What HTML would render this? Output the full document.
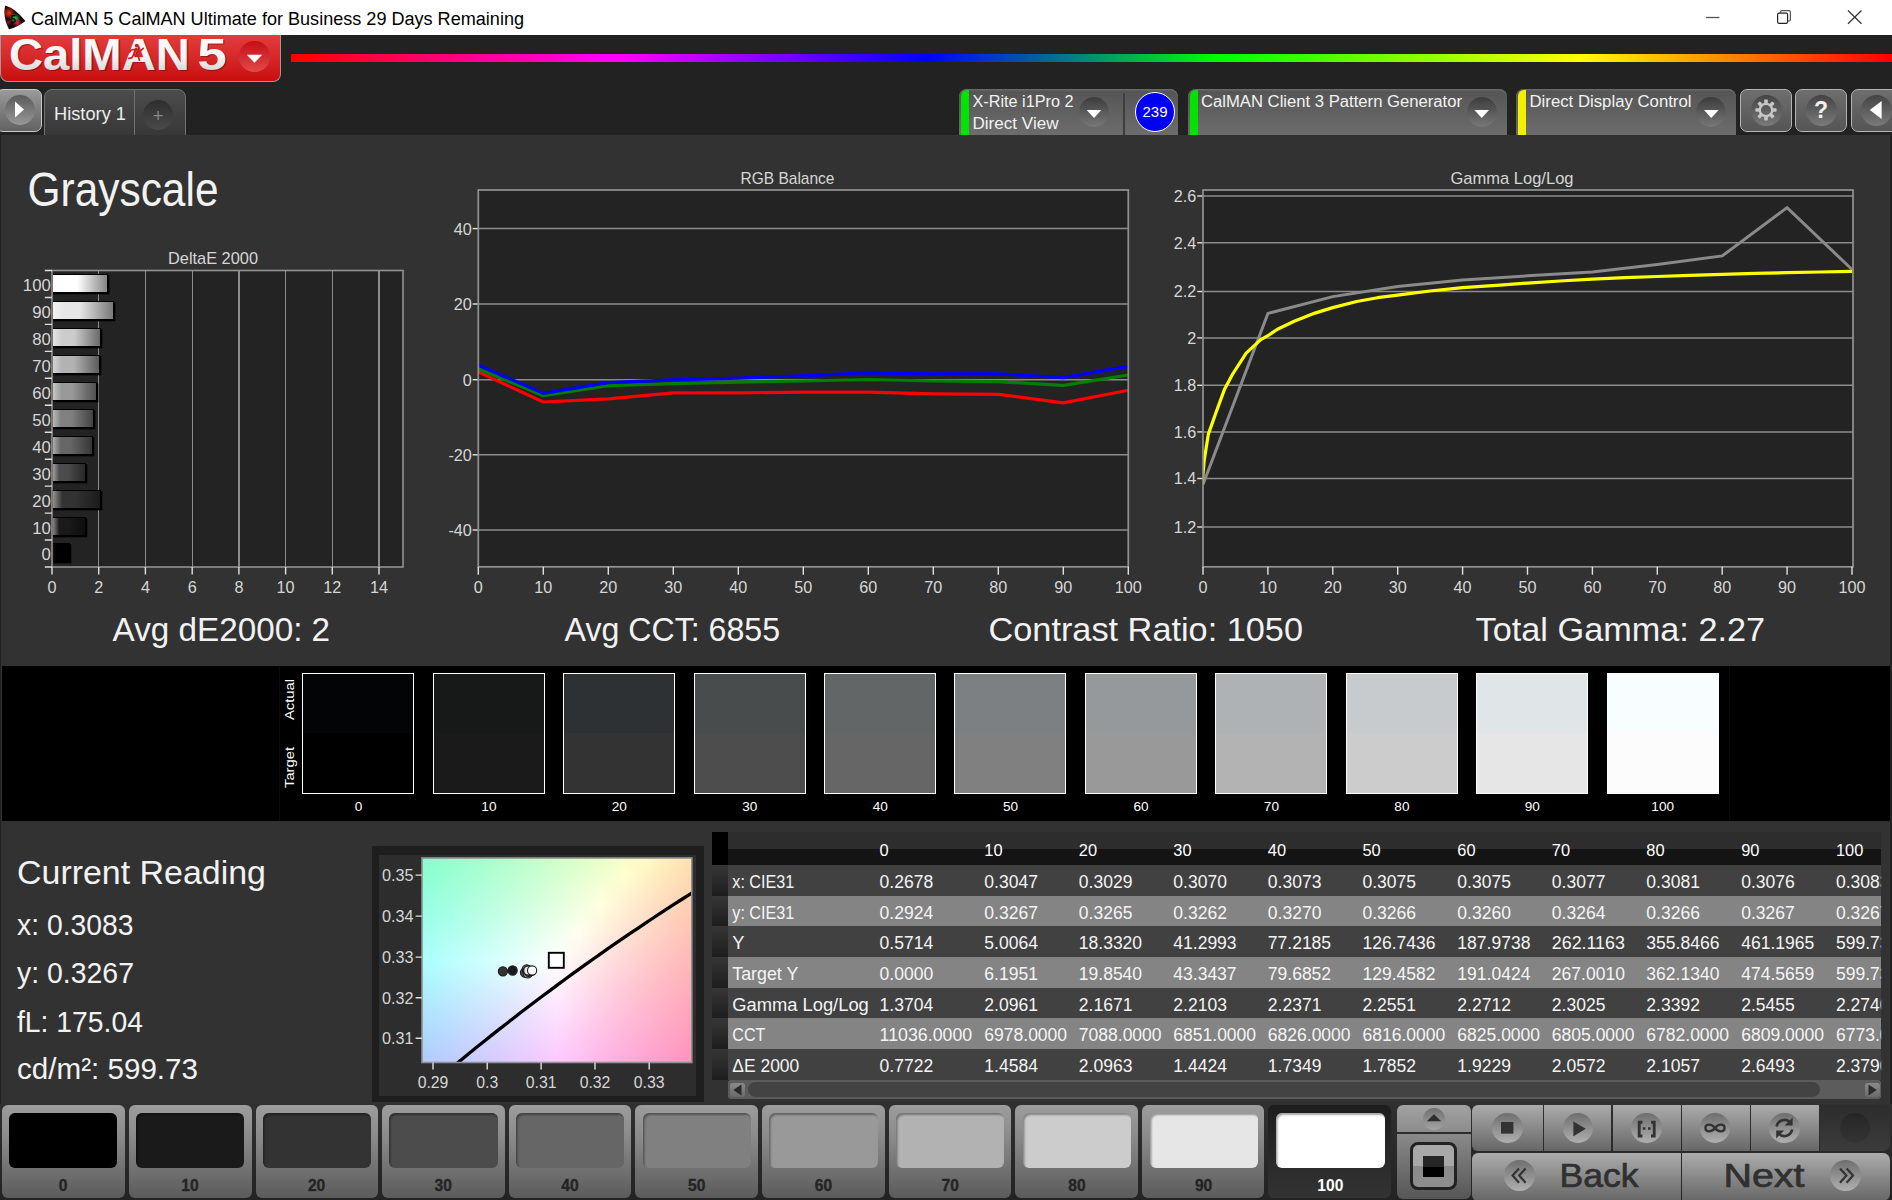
<!DOCTYPE html>
<html lang="en"><head><meta charset="utf-8"><title>CalMAN 5 CalMAN Ultimate for Business</title>
<style>
html,body{margin:0;padding:0;background:#222;}
body{width:1892px;height:1200px;overflow:hidden;position:relative;font-family:"Liberation Sans", sans-serif;}
#app{position:absolute;left:0;top:0;width:1892px;height:1200px;overflow:hidden;background:#222}
#app>div{position:absolute}
#ov{position:absolute;left:0;top:0;width:1892px;height:1200px;pointer-events:none;font-family:"Liberation Sans", sans-serif}
</style></head><body>
<div id="app">
<div style="left:0px;top:0px;width:1892px;height:35px;background:#fff"></div>
<div style="left:0px;top:35px;width:1892px;height:101px;background:#222"></div>
<div style="left:0px;top:35px;width:279px;height:45.5px;background:linear-gradient(#e23c3c,#d82a2a 45%,#c80e0e);border:1.3px solid #9a9a9a;border-top:none;border-radius:0 0 8px 8px"></div>
<div style="left:239px;top:41.2px;width:30.6px;height:30.6px;border-radius:50%;background:linear-gradient(#c40e16,#e24a4a)"></div>
<div style="left:291px;top:54px;width:1601px;height:8px;background:linear-gradient(90deg,#f00 0%,#f0f 20.5%,#00f 39.7%,#0f0 58%,#ff0 80.5%,#f00 100%)"></div>
<div style="left:-4px;top:88.8px;width:43.5px;height:41px;background:linear-gradient(#9a9a9a,#626262);border:1.5px solid #c8c8c8;border-radius:7px"></div>
<div style="left:4.7px;top:94.7px;width:30.6px;height:30.6px;border-radius:50%;background:linear-gradient(#5a5a5a,#989898)"></div>
<div style="left:44.2px;top:88.8px;width:139.5px;height:50px;background:linear-gradient(#4c4c4c,#353535);border:1.3px solid #727272;border-radius:8px 8px 0 0"></div>
<div style="left:133.8px;top:90px;width:1.3px;height:46px;background:#707070"></div>
<div style="left:143px;top:100px;width:30px;height:30px;border-radius:50%;background:linear-gradient(#2e2e2e,#4a4a4a)"></div>
<div style="left:959px;top:89px;width:219px;height:50px;background:linear-gradient(#545454,#6f6f6f);border-radius:8px 8px 0 0;box-shadow:inset 0 1.5px 0 #6a6a6a"></div>
<div style="left:961px;top:89.8px;width:8px;height:49px;background:#00e400;border-radius:6px 0 0 0"></div>
<div style="left:1079px;top:96.5px;width:30px;height:30px;border-radius:50%;background:linear-gradient(#3c3c3c,#787878)"></div>
<div style="left:1123px;top:93px;width:1.5px;height:43px;background:#3e3e3e"></div>
<div style="left:1135px;top:91.5px;width:40px;height:40px;border-radius:50%;background:#0000f4;border:1.7px solid #fff;box-sizing:border-box"></div>
<div style="left:1187.5px;top:89px;width:319.5px;height:50px;background:linear-gradient(#545454,#6f6f6f);border-radius:8px 8px 0 0;box-shadow:inset 0 1.5px 0 #6a6a6a"></div>
<div style="left:1189.5px;top:89.8px;width:8px;height:49px;background:#00e400;border-radius:6px 0 0 0"></div>
<div style="left:1466.7px;top:96.5px;width:30px;height:30px;border-radius:50%;background:linear-gradient(#3c3c3c,#787878)"></div>
<div style="left:1516px;top:89px;width:220px;height:50px;background:linear-gradient(#545454,#6f6f6f);border-radius:8px 8px 0 0;box-shadow:inset 0 1.5px 0 #6a6a6a"></div>
<div style="left:1518px;top:89.8px;width:8px;height:49px;background:#f0f000;border-radius:6px 0 0 0"></div>
<div style="left:1696.3px;top:96.5px;width:30px;height:30px;border-radius:50%;background:linear-gradient(#3c3c3c,#787878)"></div>
<div style="left:1740px;top:88.6px;width:52px;height:43px;background:linear-gradient(#6e6e6e,#555);border:1.5px solid #b4b4b4;border-radius:7px;box-sizing:border-box"></div>
<div style="left:1750.5px;top:94.5px;width:31px;height:31px;border-radius:50%;background:linear-gradient(#444,#7a7a7a)"></div>
<div style="left:1795px;top:88.6px;width:52px;height:43px;background:linear-gradient(#6e6e6e,#555);border:1.5px solid #b4b4b4;border-radius:7px;box-sizing:border-box"></div>
<div style="left:1805.5px;top:94.5px;width:31px;height:31px;border-radius:50%;background:linear-gradient(#444,#7a7a7a)"></div>
<div style="left:1850.5px;top:88.6px;width:60px;height:43px;background:linear-gradient(#6e6e6e,#555);border:1.5px solid #b4b4b4;border-radius:7px;box-sizing:border-box"></div>
<div style="left:1861.0px;top:94.5px;width:31px;height:31px;border-radius:50%;background:linear-gradient(#444,#7a7a7a)"></div>
<div style="left:1.2px;top:135.4px;width:1888.8px;height:969px;background:#323232"></div>
<div style="left:52px;top:270.5px;width:351px;height:296.5px;background:#232323"></div>
<div style="left:98.0px;top:270.5px;width:1.4px;height:296.5px;background:#8c8c8c"></div>
<div style="left:144.7px;top:270.5px;width:1.4px;height:296.5px;background:#8c8c8c"></div>
<div style="left:191.5px;top:270.5px;width:1.4px;height:296.5px;background:#8c8c8c"></div>
<div style="left:238.2px;top:270.5px;width:1.4px;height:296.5px;background:#8c8c8c"></div>
<div style="left:284.9px;top:270.5px;width:1.4px;height:296.5px;background:#8c8c8c"></div>
<div style="left:331.6px;top:270.5px;width:1.4px;height:296.5px;background:#8c8c8c"></div>
<div style="left:378.3px;top:270.5px;width:1.4px;height:296.5px;background:#8c8c8c"></div>
<div style="left:51.5px;top:273.9px;width:56.2px;height:19px;background:linear-gradient(90deg,rgba(255,255,255,0.45) 0,rgba(255,255,255,0) 20%,rgba(0,0,0,0) 45%,rgba(0,0,0,.48) 100%),rgb(255,255,255);border:1px solid #000;box-shadow:1.3px 1.3px 0 #000;box-sizing:border-box"></div>
<div style="left:51.5px;top:300.9px;width:62.5px;height:19px;background:linear-gradient(90deg,rgba(255,255,255,0.45) 0,rgba(255,255,255,0) 20%,rgba(0,0,0,0) 45%,rgba(0,0,0,.48) 100%),rgb(230,230,230);border:1px solid #000;box-shadow:1.3px 1.3px 0 #000;box-sizing:border-box"></div>
<div style="left:51.5px;top:327.8px;width:49.8px;height:19px;background:linear-gradient(90deg,rgba(255,255,255,0.45) 0,rgba(255,255,255,0) 20%,rgba(0,0,0,0) 45%,rgba(0,0,0,.48) 100%),rgb(204,204,204);border:1px solid #000;box-shadow:1.3px 1.3px 0 #000;box-sizing:border-box"></div>
<div style="left:51.5px;top:354.8px;width:48.7px;height:19px;background:linear-gradient(90deg,rgba(255,255,255,0.45) 0,rgba(255,255,255,0) 20%,rgba(0,0,0,0) 45%,rgba(0,0,0,.48) 100%),rgb(178,178,178);border:1px solid #000;box-shadow:1.3px 1.3px 0 #000;box-sizing:border-box"></div>
<div style="left:51.5px;top:381.7px;width:45.5px;height:19px;background:linear-gradient(90deg,rgba(255,255,255,0.45) 0,rgba(255,255,255,0) 20%,rgba(0,0,0,0) 45%,rgba(0,0,0,.48) 100%),rgb(153,153,153);border:1px solid #000;box-shadow:1.3px 1.3px 0 #000;box-sizing:border-box"></div>
<div style="left:51.5px;top:408.7px;width:42.3px;height:19px;background:linear-gradient(90deg,rgba(255,255,255,0.45) 0,rgba(255,255,255,0) 20%,rgba(0,0,0,0) 45%,rgba(0,0,0,.48) 100%),rgb(128,128,128);border:1px solid #000;box-shadow:1.3px 1.3px 0 #000;box-sizing:border-box"></div>
<div style="left:51.5px;top:435.6px;width:41.1px;height:19px;background:linear-gradient(90deg,rgba(255,255,255,0.45) 0,rgba(255,255,255,0) 20%,rgba(0,0,0,0) 45%,rgba(0,0,0,.48) 100%),rgb(102,102,102);border:1px solid #000;box-shadow:1.3px 1.3px 0 #000;box-sizing:border-box"></div>
<div style="left:51.5px;top:462.6px;width:34.3px;height:19px;background:linear-gradient(90deg,rgba(255,255,255,0.45) 0,rgba(255,255,255,0) 20%,rgba(0,0,0,0) 45%,rgba(0,0,0,.48) 100%),rgb(76,76,76);border:1px solid #000;box-shadow:1.3px 1.3px 0 #000;box-sizing:border-box"></div>
<div style="left:51.5px;top:489.5px;width:49.6px;height:19px;background:linear-gradient(90deg,rgba(255,255,255,0.45) 0,rgba(255,255,255,0) 20%,rgba(0,0,0,0) 45%,rgba(0,0,0,.48) 100%),rgb(51,51,51);border:1px solid #000;box-shadow:1.3px 1.3px 0 #000;box-sizing:border-box"></div>
<div style="left:51.5px;top:516.5px;width:34.7px;height:19px;background:linear-gradient(90deg,rgba(255,255,255,0.45) 0,rgba(255,255,255,0) 20%,rgba(0,0,0,0) 45%,rgba(0,0,0,.48) 100%),rgb(26,26,26);border:1px solid #000;box-shadow:1.3px 1.3px 0 #000;box-sizing:border-box"></div>
<div style="left:51.5px;top:543.4px;width:18.6px;height:19px;background:linear-gradient(90deg,rgba(255,255,255,0.08) 0,rgba(255,255,255,0) 20%,rgba(0,0,0,0) 45%,rgba(0,0,0,.48) 100%),rgb(0,0,0);border:1px solid #000;box-shadow:1.3px 1.3px 0 #000;box-sizing:border-box"></div>
<div style="left:478.3px;top:190px;width:650.0px;height:376.79999999999995px;background:#232323"></div>
<div style="left:1203px;top:190px;width:650px;height:376.79999999999995px;background:#232323"></div>
<div style="left:1.5px;top:665.5px;width:1888.5px;height:155.5px;background:#000"></div>
<div style="left:278.5px;top:665.5px;width:1px;height:155.5px;background:#0b0b0b"></div>
<div style="left:1728.5px;top:665.5px;width:1px;height:155.5px;background:#0b0b0b"></div>
<div style="left:302.3px;top:673px;width:112px;height:120.6px;box-sizing:border-box;border:1.6px solid #fff;background:linear-gradient(#030405 0,#030405 50%,#000000 50%,#000000 100%)"></div>
<div style="left:432.7px;top:673px;width:112px;height:120.6px;box-sizing:border-box;border:1.6px solid #fff;background:linear-gradient(#171918 0,#171918 50%,#1a1a1a 50%,#1a1a1a 100%)"></div>
<div style="left:563.1px;top:673px;width:112px;height:120.6px;box-sizing:border-box;border:1.6px solid #fff;background:linear-gradient(#2d3133 0,#2d3133 50%,#333333 50%,#333333 100%)"></div>
<div style="left:693.6px;top:673px;width:112px;height:120.6px;box-sizing:border-box;border:1.6px solid #fff;background:linear-gradient(#484c4d 0,#484c4d 50%,#4d4d4d 50%,#4d4d4d 100%)"></div>
<div style="left:824.0px;top:673px;width:112px;height:120.6px;box-sizing:border-box;border:1.6px solid #fff;background:linear-gradient(#626667 0,#626667 50%,#666666 50%,#666666 100%)"></div>
<div style="left:954.4px;top:673px;width:112px;height:120.6px;box-sizing:border-box;border:1.6px solid #fff;background:linear-gradient(#7c8082 0,#7c8082 50%,#808080 50%,#808080 100%)"></div>
<div style="left:1084.8px;top:673px;width:112px;height:120.6px;box-sizing:border-box;border:1.6px solid #fff;background:linear-gradient(#95999b 0,#95999b 50%,#999999 50%,#999999 100%)"></div>
<div style="left:1215.2px;top:673px;width:112px;height:120.6px;box-sizing:border-box;border:1.6px solid #fff;background:linear-gradient(#aeb2b4 0,#aeb2b4 50%,#b3b3b3 50%,#b3b3b3 100%)"></div>
<div style="left:1345.7px;top:673px;width:112px;height:120.6px;box-sizing:border-box;border:1.6px solid #fff;background:linear-gradient(#c7cbcd 0,#c7cbcd 50%,#cccccc 50%,#cccccc 100%)"></div>
<div style="left:1476.1px;top:673px;width:112px;height:120.6px;box-sizing:border-box;border:1.6px solid #fff;background:linear-gradient(#e0e5e7 0,#e0e5e7 50%,#e6e6e6 50%,#e6e6e6 100%)"></div>
<div style="left:1606.5px;top:673px;width:112px;height:120.6px;box-sizing:border-box;border:1.6px solid #fff;background:linear-gradient(#f8fdff 0,#f8fdff 50%,#fcfcfc 50%,#fcfcfc 100%)"></div>
<div style="left:371.5px;top:846px;width:332px;height:256px;background:#1e1e1e"></div>
<div style="left:379.3px;top:855px;width:316.6px;height:241.2px;background:#2d2d2d"></div>
<div style="left:422px;top:858px;width:269.8px;height:3.3px;background:linear-gradient(90deg,#86ffce,#92ffcd,#9dffcd,#a9ffcc,#b5ffcb,#c2ffcb,#cfffca,#dcffca,#e9ffc9,#f7ffc9,#fff9c4,#ffecb9,#ffe0af)"></div>
<div style="left:422px;top:861px;width:269.8px;height:3.3px;background:linear-gradient(90deg,#87ffcf,#93ffce,#9effce,#aaffcd,#b7ffcd,#c3ffcc,#d0ffcc,#ddffcb,#ebffcb,#f8ffca,#fff8c4,#ffebb9,#ffdfaf)"></div>
<div style="left:422px;top:864px;width:269.8px;height:3.3px;background:linear-gradient(90deg,#88ffd0,#94ffd0,#9fffcf,#abffcf,#b8ffce,#c4ffce,#d1ffcd,#deffcd,#ecffcc,#faffcb,#fff6c4,#ffeab9,#ffdeaf)"></div>
<div style="left:422px;top:867px;width:269.8px;height:3.3px;background:linear-gradient(90deg,#89ffd1,#95ffd1,#a0ffd1,#adffd0,#b9ffd0,#c6ffcf,#d3ffcf,#e0ffce,#edffcd,#fbffcd,#fff5c4,#ffe8ba,#ffddb0)"></div>
<div style="left:422px;top:870px;width:269.8px;height:3.3px;background:linear-gradient(90deg,#8affd3,#96ffd2,#a2ffd2,#aeffd1,#baffd1,#c7ffd0,#d4ffd0,#e1ffcf,#efffcf,#fdffce,#fff4c5,#ffe7ba,#ffdbb0)"></div>
<div style="left:422px;top:873px;width:269.8px;height:3.3px;background:linear-gradient(90deg,#8bffd4,#97ffd4,#a3ffd3,#afffd3,#bbffd2,#c8ffd2,#d5ffd1,#e3ffd1,#f0ffd0,#feffd0,#fff2c5,#ffe6ba,#ffdab0)"></div>
<div style="left:422px;top:876px;width:269.8px;height:3.3px;background:linear-gradient(90deg,#8cffd5,#98ffd5,#a4ffd5,#b0ffd4,#bdffd4,#c9ffd3,#d6ffd3,#e4ffd2,#f2ffd2,#fffed1,#fff1c5,#ffe4ba,#ffd9b0)"></div>
<div style="left:422px;top:879px;width:269.8px;height:3.3px;background:linear-gradient(90deg,#8dffd7,#99ffd6,#a5ffd6,#b1ffd6,#beffd5,#cbffd5,#d8ffd4,#e5ffd4,#f3ffd3,#fffdd1,#ffefc5,#ffe3bb,#ffd7b1)"></div>
<div style="left:422px;top:882px;width:269.8px;height:3.3px;background:linear-gradient(90deg,#8effd8,#9affd8,#a6ffd7,#b2ffd7,#bfffd6,#ccffd6,#d9ffd6,#e7ffd5,#f5ffd5,#fffbd1,#ffeec5,#ffe2bb,#ffd6b1)"></div>
<div style="left:422px;top:885px;width:269.8px;height:3.3px;background:linear-gradient(90deg,#8fffd9,#9bffd9,#a7ffd9,#b3ffd8,#c0ffd8,#cdffd7,#dbffd7,#e8ffd7,#f6ffd6,#fffad1,#ffecc6,#ffe0bb,#ffd5b1)"></div>
<div style="left:422px;top:888px;width:269.8px;height:3.3px;background:linear-gradient(90deg,#90ffdb,#9cffda,#a8ffda,#b5ffda,#c1ffd9,#ceffd9,#dcffd9,#eaffd8,#f8ffd8,#fff8d2,#ffebc6,#ffdfbb,#ffd4b1)"></div>
<div style="left:422px;top:891px;width:269.8px;height:3.3px;background:linear-gradient(90deg,#91ffdc,#9dffdc,#a9ffdc,#b6ffdb,#c3ffdb,#d0ffda,#ddffda,#ebffda,#f9ffd9,#fff7d2,#ffeac6,#ffdebc,#ffd2b2)"></div>
<div style="left:422px;top:894px;width:269.8px;height:3.3px;background:linear-gradient(90deg,#92ffde,#9effdd,#aaffdd,#b7ffdd,#c4ffdc,#d1ffdc,#dfffdb,#ecffdb,#fbffdb,#fff5d2,#ffe8c6,#ffdcbc,#ffd1b2)"></div>
<div style="left:422px;top:897px;width:269.8px;height:3.3px;background:linear-gradient(90deg,#93ffdf,#9fffdf,#acffde,#b8ffde,#c5ffde,#d2ffdd,#e0ffdd,#eeffdd,#fcffdc,#fff4d2,#ffe7c7,#ffdbbc,#ffd0b2)"></div>
<div style="left:422px;top:900px;width:269.8px;height:3.3px;background:linear-gradient(90deg,#94ffe0,#a0ffe0,#adffe0,#b9ffe0,#c6ffdf,#d4ffdf,#e1ffde,#efffde,#feffde,#fff2d2,#ffe5c7,#ffdabc,#ffcfb2)"></div>
<div style="left:422px;top:903px;width:269.8px;height:3.3px;background:linear-gradient(90deg,#95ffe2,#a1ffe2,#aeffe1,#bbffe1,#c8ffe1,#d5ffe0,#e3ffe0,#f1ffe0,#ffffdf,#fff1d3,#ffe4c7,#ffd8bc,#ffcdb3)"></div>
<div style="left:422px;top:906px;width:269.8px;height:3.3px;background:linear-gradient(90deg,#96ffe3,#a2ffe3,#afffe3,#bcffe2,#c9ffe2,#d6ffe2,#e4ffe2,#f2ffe1,#fffddf,#ffefd3,#ffe3c7,#ffd7bd,#ffccb3)"></div>
<div style="left:422px;top:909px;width:269.8px;height:3.3px;background:linear-gradient(90deg,#97ffe5,#a4ffe4,#b0ffe4,#bdffe4,#caffe4,#d8ffe3,#e6ffe3,#f4ffe3,#fffcdf,#ffeed3,#ffe1c8,#ffd6bd,#ffcbb3)"></div>
<div style="left:422px;top:912px;width:269.8px;height:3.3px;background:linear-gradient(90deg,#98ffe6,#a5ffe6,#b1ffe6,#beffe5,#ccffe5,#d9ffe5,#e7ffe5,#f5ffe4,#fffae0,#ffecd3,#ffe0c8,#ffd4bd,#ffcab3)"></div>
<div style="left:422px;top:915px;width:269.8px;height:3.3px;background:linear-gradient(90deg,#99ffe8,#a6ffe7,#b3ffe7,#c0ffe7,#cdffe7,#dbffe6,#e9ffe6,#f7ffe6,#fff9e0,#ffebd3,#ffdfc8,#ffd3bd,#ffc9b4)"></div>
<div style="left:422px;top:918px;width:269.8px;height:3.3px;background:linear-gradient(90deg,#9affe9,#a7ffe9,#b4ffe9,#c1ffe8,#ceffe8,#dcffe8,#eaffe8,#f8ffe7,#fff7e0,#ffead4,#ffddc8,#ffd2be,#ffc7b4)"></div>
<div style="left:422px;top:921px;width:269.8px;height:3.3px;background:linear-gradient(90deg,#9bffeb,#a8ffea,#b5ffea,#c2ffea,#d0ffea,#ddffea,#ecffe9,#faffe9,#fff6e0,#ffe8d4,#ffdcc8,#ffd1be,#ffc6b4)"></div>
<div style="left:422px;top:924px;width:269.8px;height:3.3px;background:linear-gradient(90deg,#9dffec,#a9ffec,#b6ffec,#c3ffec,#d1ffeb,#dfffeb,#edffeb,#fcffeb,#fff4e0,#ffe7d4,#ffdbc9,#ffcfbe,#ffc5b4)"></div>
<div style="left:422px;top:927px;width:269.8px;height:3.3px;background:linear-gradient(90deg,#9effee,#aaffed,#b7ffed,#c5ffed,#d2ffed,#e0ffed,#eeffed,#fdffec,#fff3e1,#ffe5d4,#ffd9c9,#ffcebe,#ffc4b5)"></div>
<div style="left:422px;top:930px;width:269.8px;height:3.3px;background:linear-gradient(90deg,#9fffef,#acffef,#b9ffef,#c6ffef,#d4ffef,#e2ffee,#f0ffee,#ffffee,#fff1e1,#ffe4d4,#ffd8c9,#ffcdbf,#ffc3b5)"></div>
<div style="left:422px;top:933px;width:269.8px;height:3.3px;background:linear-gradient(90deg,#a0fff1,#adfff1,#bafff0,#c7fff0,#d5fff0,#e3fff0,#f2fff0,#fffeee,#fff0e1,#ffe3d5,#ffd7c9,#ffccbf,#ffc1b5)"></div>
<div style="left:422px;top:936px;width:269.8px;height:3.3px;background:linear-gradient(90deg,#a1fff2,#aefff2,#bbfff2,#c9fff2,#d6fff2,#e5fff2,#f3fff1,#fffcef,#ffeee1,#ffe1d5,#ffd5c9,#ffcabf,#ffc0b5)"></div>
<div style="left:422px;top:939px;width:269.8px;height:3.3px;background:linear-gradient(90deg,#a2fff4,#affff4,#bcfff4,#cafff3,#d8fff3,#e6fff3,#f5fff3,#fffbef,#ffede1,#ffe0d5,#ffd4ca,#ffc9bf,#ffbfb6)"></div>
<div style="left:422px;top:942px;width:269.8px;height:3.3px;background:linear-gradient(90deg,#a3fff5,#b0fff5,#befff5,#cbfff5,#d9fff5,#e8fff5,#f6fff5,#fff9ef,#ffebe1,#ffded5,#ffd3ca,#ffc8bf,#ffbeb6)"></div>
<div style="left:422px;top:945px;width:269.8px;height:3.3px;background:linear-gradient(90deg,#a4fff7,#b2fff7,#bffff7,#cdfff7,#dbfff7,#e9fff7,#f8fff7,#fff7ef,#ffeae2,#ffddd5,#ffd1ca,#ffc7c0,#ffbdb6)"></div>
<div style="left:422px;top:948px;width:269.8px;height:3.3px;background:linear-gradient(90deg,#a6fff9,#b3fff8,#c0fff8,#cefff8,#dcfff8,#ebfff8,#f9fff8,#fff6ef,#ffe8e2,#ffdcd6,#ffd0ca,#ffc5c0,#ffbcb6)"></div>
<div style="left:422px;top:951px;width:269.8px;height:3.3px;background:linear-gradient(90deg,#a7fffa,#b4fffa,#c2fffa,#cffffa,#defffa,#ecfffa,#fbfffa,#fff4ef,#ffe7e2,#ffdad6,#ffcfcb,#ffc4c0,#ffbab7)"></div>
<div style="left:422px;top:954px;width:269.8px;height:3.3px;background:linear-gradient(90deg,#a8fffc,#b5fffc,#c3fffc,#d1fffc,#dffffc,#eefffc,#fdfffc,#fff3f0,#ffe5e2,#ffd9d6,#ffcdcb,#ffc3c0,#ffb9b7)"></div>
<div style="left:422px;top:957px;width:269.8px;height:3.3px;background:linear-gradient(90deg,#a9fffd,#b6fffd,#c4fffd,#d2fffd,#e0fffd,#effffd,#fefffd,#fff1f0,#ffe4e2,#ffd7d6,#ffcccb,#ffc2c1,#ffb8b7)"></div>
<div style="left:422px;top:960px;width:269.8px;height:3.3px;background:linear-gradient(90deg,#aaffff,#b8ffff,#c5ffff,#d3ffff,#e2ffff,#f1ffff,#fffefe,#fff0f0,#ffe2e3,#ffd6d6,#ffcbcb,#ffc1c1,#ffb7b7)"></div>
<div style="left:422px;top:963px;width:269.8px;height:3.3px;background:linear-gradient(90deg,#aafdff,#b8fdff,#c5fdff,#d3fdff,#e2fdff,#f0fdff,#fffdff,#ffeef0,#ffe1e3,#ffd5d7,#ffcacb,#ffbfc1,#ffb6b7)"></div>
<div style="left:422px;top:966px;width:269.8px;height:3.3px;background:linear-gradient(90deg,#abfcff,#b8fcff,#c5fcff,#d3fcff,#e2fbff,#f0fbff,#fffbff,#ffedf0,#ffdfe3,#ffd3d7,#ffc8cc,#ffbec1,#ffb5b8)"></div>
<div style="left:422px;top:969px;width:269.8px;height:3.3px;background:linear-gradient(90deg,#abfaff,#b8faff,#c6faff,#d3faff,#e2faff,#f0faff,#fff9ff,#ffebf0,#ffdee3,#ffd2d7,#ffc7cc,#ffbdc1,#ffb4b8)"></div>
<div style="left:422px;top:972px;width:269.8px;height:3.3px;background:linear-gradient(90deg,#abf8ff,#b8f8ff,#c6f8ff,#d3f8ff,#e2f8ff,#f0f8ff,#fff8ff,#ffeaf0,#ffdde3,#ffd1d7,#ffc6cc,#ffbcc2,#ffb2b8)"></div>
<div style="left:422px;top:975px;width:269.8px;height:3.3px;background:linear-gradient(90deg,#abf7ff,#b8f7ff,#c6f7ff,#d3f6ff,#e2f6ff,#f0f6ff,#fff6ff,#ffe8f1,#ffdbe3,#ffcfd7,#ffc5cc,#ffbbc2,#ffb1b8)"></div>
<div style="left:422px;top:978px;width:269.8px;height:3.3px;background:linear-gradient(90deg,#abf5ff,#b8f5ff,#c6f5ff,#d3f5ff,#e2f5ff,#f0f5ff,#fff4ff,#ffe7f1,#ffdae4,#ffced8,#ffc3cc,#ffb9c2,#ffb0b9)"></div>
<div style="left:422px;top:981px;width:269.8px;height:3.3px;background:linear-gradient(90deg,#abf4ff,#b8f4ff,#c6f3ff,#d3f3ff,#e2f3ff,#f0f3ff,#fff3ff,#ffe5f1,#ffd8e4,#ffcdd8,#ffc2cd,#ffb8c2,#ffafb9)"></div>
<div style="left:422px;top:984px;width:269.8px;height:3.3px;background:linear-gradient(90deg,#abf2ff,#b8f2ff,#c6f2ff,#d3f2ff,#e1f1ff,#f0f1ff,#fff1ff,#ffe4f1,#ffd7e4,#ffccd8,#ffc1cd,#ffb7c3,#ffaeb9)"></div>
<div style="left:422px;top:987px;width:269.8px;height:3.3px;background:linear-gradient(90deg,#abf1ff,#b8f0ff,#c6f0ff,#d3f0ff,#e1f0ff,#f0f0ff,#feefff,#ffe2f1,#ffd6e4,#ffcad8,#ffc0cd,#ffb6c3,#ffadb9)"></div>
<div style="left:422px;top:990px;width:269.8px;height:3.3px;background:linear-gradient(90deg,#abefff,#b8efff,#c6efff,#d3eeff,#e1eeff,#f0eeff,#feeeff,#ffe1f1,#ffd4e4,#ffc9d8,#ffbecd,#ffb5c3,#ffacb9)"></div>
<div style="left:422px;top:993px;width:269.8px;height:3.3px;background:linear-gradient(90deg,#abedff,#b8edff,#c6edff,#d3edff,#e1ecff,#f0ecff,#feecff,#ffdff2,#ffd3e4,#ffc8d8,#ffbdcd,#ffb4c3,#ffabba)"></div>
<div style="left:422px;top:996px;width:269.8px;height:3.3px;background:linear-gradient(90deg,#acecff,#b9ecff,#c6ebff,#d3ebff,#e1ebff,#f0ebff,#feeaff,#ffdef2,#ffd2e5,#ffc6d9,#ffbcce,#ffb2c3,#ffa9ba)"></div>
<div style="left:422px;top:999px;width:269.8px;height:3.3px;background:linear-gradient(90deg,#aceaff,#b9eaff,#c6eaff,#d3eaff,#e1e9ff,#efe9ff,#fee9ff,#ffdcf2,#ffd0e5,#ffc5d9,#ffbbce,#ffb1c4,#ffa8ba)"></div>
<div style="left:422px;top:1002px;width:269.8px;height:3.3px;background:linear-gradient(90deg,#ace9ff,#b9e9ff,#c6e8ff,#d3e8ff,#e1e8ff,#efe7ff,#fee7ff,#ffdbf2,#ffcfe5,#ffc4d9,#ffbace,#ffb0c4,#ffa7ba)"></div>
<div style="left:422px;top:1005px;width:269.8px;height:3.3px;background:linear-gradient(90deg,#ace7ff,#b9e7ff,#c6e7ff,#d3e6ff,#e1e6ff,#efe6ff,#fee5ff,#ffd9f2,#ffcde5,#ffc2d9,#ffb8ce,#ffafc4,#ffa6bb)"></div>
<div style="left:422px;top:1008px;width:269.8px;height:3.3px;background:linear-gradient(90deg,#ace6ff,#b9e5ff,#c6e5ff,#d3e5ff,#e1e4ff,#efe4ff,#fee4ff,#ffd8f2,#ffcce5,#ffc1d9,#ffb7ce,#ffaec4,#ffa5bb)"></div>
<div style="left:422px;top:1011px;width:269.8px;height:3.3px;background:linear-gradient(90deg,#ace4ff,#b9e4ff,#c6e4ff,#d3e3ff,#e1e3ff,#efe3ff,#fee2ff,#ffd7f2,#ffcbe5,#ffc0da,#ffb6cf,#ffadc4,#ffa4bb)"></div>
<div style="left:422px;top:1014px;width:269.8px;height:3.3px;background:linear-gradient(90deg,#ace3ff,#b9e2ff,#c6e2ff,#d3e2ff,#e1e1ff,#efe1ff,#fde1ff,#ffd5f3,#ffc9e6,#ffbfda,#ffb5cf,#ffacc5,#ffa3bb)"></div>
<div style="left:422px;top:1017px;width:269.8px;height:3.3px;background:linear-gradient(90deg,#ace1ff,#b9e1ff,#c6e1ff,#d3e0ff,#e1e0ff,#efdfff,#fddfff,#ffd4f3,#ffc8e6,#ffbdda,#ffb4cf,#ffaac5,#ffa2bb)"></div>
<div style="left:422px;top:1020px;width:269.8px;height:3.3px;background:linear-gradient(90deg,#ace0ff,#b9dfff,#c6dfff,#d3dfff,#e1deff,#efdeff,#fdddff,#ffd2f3,#ffc7e6,#ffbcda,#ffb2cf,#ffa9c5,#ffa1bc)"></div>
<div style="left:422px;top:1023px;width:269.8px;height:3.3px;background:linear-gradient(90deg,#acdeff,#b9deff,#c6ddff,#d3ddff,#e1ddff,#efdcff,#fddcff,#ffd1f3,#ffc5e6,#ffbbda,#ffb1cf,#ffa8c5,#ffa0bc)"></div>
<div style="left:422px;top:1026px;width:269.8px;height:3.3px;background:linear-gradient(90deg,#adddff,#b9dcff,#c6dcff,#d3dcff,#e1dbff,#efdbff,#fddaff,#ffd0f3,#ffc4e6,#ffbada,#ffb0d0,#ffa7c5,#ff9fbc)"></div>
<div style="left:422px;top:1029px;width:269.8px;height:3.3px;background:linear-gradient(90deg,#addbff,#b9dbff,#c6daff,#d3daff,#e1daff,#efd9ff,#fdd9ff,#ffcef3,#ffc3e6,#ffb8db,#ffafd0,#ffa6c6,#ff9ebc)"></div>
<div style="left:422px;top:1032px;width:269.8px;height:3.3px;background:linear-gradient(90deg,#addaff,#b9d9ff,#c6d9ff,#d3d9ff,#e1d8ff,#efd8ff,#fdd7ff,#ffcdf3,#ffc2e7,#ffb7db,#ffaed0,#ffa5c6,#ff9dbc)"></div>
<div style="left:422px;top:1035px;width:269.8px;height:3.3px;background:linear-gradient(90deg,#add8ff,#b9d8ff,#c6d8ff,#d3d7ff,#e1d7ff,#efd6ff,#fdd6ff,#ffcbf4,#ffc0e7,#ffb6db,#ffadd0,#ffa4c6,#ff9cbd)"></div>
<div style="left:422px;top:1038px;width:269.8px;height:3.3px;background:linear-gradient(90deg,#add7ff,#b9d7ff,#c6d6ff,#d3d6ff,#e1d5ff,#eed5ff,#fdd4ff,#ffcaf4,#ffbfe7,#ffb5db,#ffabd0,#ffa3c6,#ff9abd)"></div>
<div style="left:422px;top:1041px;width:269.8px;height:3.3px;background:linear-gradient(90deg,#add6ff,#b9d5ff,#c6d5ff,#d3d4ff,#e1d4ff,#eed3ff,#fcd2ff,#ffc9f4,#ffbee7,#ffb4db,#ffaad1,#ffa2c6,#ff99bd)"></div>
<div style="left:422px;top:1044px;width:269.8px;height:3.3px;background:linear-gradient(90deg,#add4ff,#bad4ff,#c6d3ff,#d3d3ff,#e1d2ff,#eed1ff,#fcd1ff,#ffc7f4,#ffbce7,#ffb2dc,#ffa9d1,#ffa0c7,#ff98bd)"></div>
<div style="left:422px;top:1047px;width:269.8px;height:3.3px;background:linear-gradient(90deg,#add3ff,#bad2ff,#c6d2ff,#d3d1ff,#e1d1ff,#eed0ff,#fccfff,#ffc6f4,#ffbbe7,#ffb1dc,#ffa8d1,#ff9fc7,#ff97be)"></div>
<div style="left:422px;top:1050px;width:269.8px;height:3.3px;background:linear-gradient(90deg,#add1ff,#bad1ff,#c6d0ff,#d3d0ff,#e1cfff,#eecfff,#fcceff,#ffc5f4,#ffbae8,#ffb0dc,#ffa7d1,#ff9ec7,#ff96be)"></div>
<div style="left:422px;top:1053px;width:269.8px;height:3.3px;background:linear-gradient(90deg,#add0ff,#bacfff,#c6cfff,#d3ceff,#e1ceff,#eecdff,#fcccff,#ffc3f4,#ffb9e8,#ffafdc,#ffa6d1,#ff9dc7,#ff95be)"></div>
<div style="left:422px;top:1056px;width:269.8px;height:3.3px;background:linear-gradient(90deg,#adceff,#baceff,#c6cdff,#d3cdff,#e1ccff,#eeccff,#fccbff,#ffc2f4,#ffb7e8,#ffaedc,#ffa4d1,#ff9cc7,#ff94be)"></div>
<div style="left:422px;top:1059px;width:269.8px;height:3.3px;background:linear-gradient(90deg,#aecdff,#baccff,#c6ccff,#d3cbff,#e0cbff,#eecaff,#fcc9ff,#ffc1f5,#ffb6e8,#ffacdc,#ffa3d2,#ff9bc8,#ff93be)"></div>
<div style="left:422px;top:1062px;width:269.8px;height:0.8px;background:linear-gradient(90deg,#aeccff,#baccff,#c6cbff,#d3caff,#e0caff,#eec9ff,#fcc9ff,#ffc0f5,#ffb5e8,#ffacdc,#ffa3d2,#ff9ac8,#ff93be)"></div>
<div style="left:712.2px;top:832px;width:1169.0px;height:17px;background:#2d2d2d"></div>
<div style="left:712.2px;top:849px;width:1169.0px;height:15.8px;background:#141414"></div>
<div style="left:712.2px;top:832px;width:16px;height:32.8px;background:#000"></div>
<div style="left:712.2px;top:864.8px;width:1169.0px;height:30.9px;background:#414141"></div>
<div style="left:712.2px;top:864.8px;width:16px;height:30.9px;background:linear-gradient(#363636,#1d1d1d)"></div>
<div style="left:712.2px;top:895.5px;width:1169.0px;height:30.9px;background:#848484"></div>
<div style="left:712.2px;top:895.5px;width:16px;height:30.9px;background:linear-gradient(#363636,#1d1d1d)"></div>
<div style="left:712.2px;top:926.2px;width:1169.0px;height:30.9px;background:#414141"></div>
<div style="left:712.2px;top:926.2px;width:16px;height:30.9px;background:linear-gradient(#363636,#1d1d1d)"></div>
<div style="left:712.2px;top:956.9px;width:1169.0px;height:30.9px;background:#848484"></div>
<div style="left:712.2px;top:956.9px;width:16px;height:30.9px;background:linear-gradient(#363636,#1d1d1d)"></div>
<div style="left:712.2px;top:987.6px;width:1169.0px;height:30.9px;background:#414141"></div>
<div style="left:712.2px;top:987.6px;width:16px;height:30.9px;background:linear-gradient(#363636,#1d1d1d)"></div>
<div style="left:712.2px;top:1018.3px;width:1169.0px;height:30.9px;background:#848484"></div>
<div style="left:712.2px;top:1018.3px;width:16px;height:30.9px;background:linear-gradient(#363636,#1d1d1d)"></div>
<div style="left:712.2px;top:1049.0px;width:1169.0px;height:30.9px;background:#414141"></div>
<div style="left:712.2px;top:1049.0px;width:16px;height:30.9px;background:linear-gradient(#363636,#1d1d1d)"></div>
<div style="left:728.2px;top:1080.2px;width:1153.0px;height:18.6px;background:#5c5c5c;border-radius:3px"></div>
<div style="left:748px;top:1081.8px;width:1072px;height:15.6px;background:#434343;border-radius:8px"></div>
<div style="left:729.5px;top:1083px;width:15.5px;height:14px;background:linear-gradient(#8a8a8a,#6a6a6a);border-radius:3px"></div>
<div style="left:1864.5px;top:1083px;width:15.5px;height:14px;background:linear-gradient(#8a8a8a,#6a6a6a);border-radius:3px"></div>
<div style="left:0px;top:1104px;width:1892px;height:96px;background:linear-gradient(#303030,#232323)"></div>
<div style="left:2.4px;top:1105px;width:122.7px;height:93.2px;background:linear-gradient(#9d9d9d,#8a8a8a 35%,#5b5b5b);border-radius:6px"></div>
<div style="left:9.1px;top:1112.7px;width:108.4px;height:55.2px;background:rgb(0,0,0);border-radius:6px;"></div>
<div style="left:129.0px;top:1105px;width:122.7px;height:93.2px;background:linear-gradient(#9d9d9d,#8a8a8a 35%,#5b5b5b);border-radius:6px"></div>
<div style="left:135.8px;top:1112.7px;width:108.4px;height:55.2px;background:rgb(26,26,26);border-radius:6px;box-shadow:inset 1.5px 2px 2px rgba(0,0,0,.35)"></div>
<div style="left:255.6px;top:1105px;width:122.7px;height:93.2px;background:linear-gradient(#9d9d9d,#8a8a8a 35%,#5b5b5b);border-radius:6px"></div>
<div style="left:262.5px;top:1112.7px;width:108.4px;height:55.2px;background:rgb(51,51,51);border-radius:6px;box-shadow:inset 1.5px 2px 2px rgba(0,0,0,.35)"></div>
<div style="left:382.2px;top:1105px;width:122.7px;height:93.2px;background:linear-gradient(#9d9d9d,#8a8a8a 35%,#5b5b5b);border-radius:6px"></div>
<div style="left:389.2px;top:1112.7px;width:108.4px;height:55.2px;background:rgb(76,76,76);border-radius:6px;box-shadow:inset 1.5px 2px 2px rgba(0,0,0,.35)"></div>
<div style="left:508.8px;top:1105px;width:122.7px;height:93.2px;background:linear-gradient(#9d9d9d,#8a8a8a 35%,#5b5b5b);border-radius:6px"></div>
<div style="left:515.9px;top:1112.7px;width:108.4px;height:55.2px;background:rgb(102,102,102);border-radius:6px;box-shadow:inset 1.5px 2px 2px rgba(0,0,0,.35)"></div>
<div style="left:635.4px;top:1105px;width:122.7px;height:93.2px;background:linear-gradient(#9d9d9d,#8a8a8a 35%,#5b5b5b);border-radius:6px"></div>
<div style="left:642.6px;top:1112.7px;width:108.4px;height:55.2px;background:rgb(128,128,128);border-radius:6px;box-shadow:inset 1.5px 2px 2px rgba(0,0,0,.35)"></div>
<div style="left:762.0px;top:1105px;width:122.7px;height:93.2px;background:linear-gradient(#9d9d9d,#8a8a8a 35%,#5b5b5b);border-radius:6px"></div>
<div style="left:769.4px;top:1112.7px;width:108.4px;height:55.2px;background:rgb(153,153,153);border-radius:6px;box-shadow:inset 1.5px 2px 2px rgba(0,0,0,.35)"></div>
<div style="left:888.6px;top:1105px;width:122.7px;height:93.2px;background:linear-gradient(#9d9d9d,#8a8a8a 35%,#5b5b5b);border-radius:6px"></div>
<div style="left:896.1px;top:1112.7px;width:108.4px;height:55.2px;background:rgb(178,178,178);border-radius:6px;box-shadow:inset 1.5px 2px 2px rgba(0,0,0,.35)"></div>
<div style="left:1015.2px;top:1105px;width:122.7px;height:93.2px;background:linear-gradient(#9d9d9d,#8a8a8a 35%,#5b5b5b);border-radius:6px"></div>
<div style="left:1022.8px;top:1112.7px;width:108.4px;height:55.2px;background:rgb(204,204,204);border-radius:6px;box-shadow:inset 1.5px 2px 2px rgba(0,0,0,.35)"></div>
<div style="left:1141.8px;top:1105px;width:122.7px;height:93.2px;background:linear-gradient(#9d9d9d,#8a8a8a 35%,#5b5b5b);border-radius:6px"></div>
<div style="left:1149.5px;top:1112.7px;width:108.4px;height:55.2px;background:rgb(230,230,230);border-radius:6px;box-shadow:inset 1.5px 2px 2px rgba(0,0,0,.35)"></div>
<div style="left:1268.4px;top:1105px;width:122.7px;height:93.2px;background:linear-gradient(#1d1d1d,#333);border-radius:6px"></div>
<div style="left:1276.2px;top:1112.7px;width:108.4px;height:55.2px;background:rgb(255,255,255);border-radius:6px;box-shadow:inset 1.5px 2px 2px rgba(0,0,0,.35)"></div>
<div style="left:1397px;top:1105px;width:73.5px;height:27.4px;background:linear-gradient(#a2a2a2,#8c8c8c);border-radius:6px 6px 0 0"></div>
<div style="left:1397px;top:1134px;width:73.5px;height:64.5px;background:linear-gradient(#8a8a8a,#565656);border-radius:0 0 6px 6px"></div>
<div style="left:1423px;top:1107.7px;width:22px;height:22px;border-radius:50%;background:linear-gradient(#707070,#a4a4a4)"></div>
<div style="left:1410px;top:1142.3px;width:47.2px;height:47.4px;box-sizing:border-box;border:3.6px solid #222;border-radius:8px;background:linear-gradient(#a8a8a8 0,#a8a8a8 50%,#8a8a8a 50%,#8e8e8e 100%)"></div>
<div style="left:1423.36px;top:1156px;width:20.7px;height:20.6px;background:linear-gradient(#262626 0,#262626 50%,#000 50%,#000 100%)"></div>
<div style="left:1471.8px;top:1104.8px;width:71.2px;height:46px;background:linear-gradient(#ababab,#676767);border-radius:6px 0 0 6px;"></div>
<div style="left:1544.2px;top:1104.8px;width:67.2px;height:46px;background:linear-gradient(#ababab,#676767);"></div>
<div style="left:1612.6px;top:1104.8px;width:68.0px;height:46px;background:linear-gradient(#ababab,#676767);"></div>
<div style="left:1681.8px;top:1104.8px;width:67.8px;height:46px;background:linear-gradient(#ababab,#676767);"></div>
<div style="left:1750.9px;top:1104.8px;width:67.7px;height:46px;background:linear-gradient(#ababab,#676767);"></div>
<div style="left:1819.6px;top:1104.8px;width:70.2px;height:46px;background:linear-gradient(#2c2c2c,#3c3c3c);border-radius:0 7px 7px 0"></div>
<div style="left:1491.8px;top:1112.6px;width:30.8px;height:30.8px;border-radius:50%;background:linear-gradient(#6e6e6e,#b0b0b0)"></div>
<div style="left:1562.7px;top:1112.6px;width:30.8px;height:30.8px;border-radius:50%;background:linear-gradient(#6e6e6e,#b0b0b0)"></div>
<div style="left:1631.0px;top:1112.6px;width:30.8px;height:30.8px;border-radius:50%;background:linear-gradient(#6e6e6e,#b0b0b0)"></div>
<div style="left:1699.6px;top:1112.6px;width:30.8px;height:30.8px;border-radius:50%;background:linear-gradient(#6e6e6e,#b0b0b0)"></div>
<div style="left:1769.0px;top:1112.6px;width:30.8px;height:30.8px;border-radius:50%;background:linear-gradient(#6e6e6e,#b0b0b0)"></div>
<div style="left:1839.6px;top:1112.6px;width:30.8px;height:30.8px;border-radius:50%;background:linear-gradient(#262626,#343434)"></div>
<div style="left:1471.8px;top:1153px;width:208.8px;height:48px;background:linear-gradient(#acacac,#666);border-radius:6px 0 0 6px"></div>
<div style="left:1681.8px;top:1153px;width:208.2px;height:48px;background:linear-gradient(#acacac,#666);border-radius:0 7px 7px 0"></div>
<div style="left:1504px;top:1160.2px;width:30.8px;height:30.8px;border-radius:50%;background:linear-gradient(#6e6e6e,#b0b0b0)"></div>
<div style="left:1830.4px;top:1160.2px;width:30.8px;height:30.8px;border-radius:50%;background:linear-gradient(#6e6e6e,#b0b0b0)"></div>
<svg id="ov" width="1892" height="1200" viewBox="0 0 1892 1200">
<defs><clipPath id="icc"><path d="M5.2 5.4Q15.5 8.5 25.4 21Q17.5 27.2 9 29.2Q2.6 17 5.2 5.4Z"/></clipPath><radialGradient id="ic1"><stop offset="0" stop-color="#ff3010"/><stop offset="1" stop-color="#ff3010" stop-opacity="0"/></radialGradient><radialGradient id="ic2"><stop offset="0" stop-color="#30d040"/><stop offset="1" stop-color="#30d040" stop-opacity="0"/></radialGradient><radialGradient id="ic3"><stop offset="0" stop-color="#e0204a"/><stop offset="1" stop-color="#e0204a" stop-opacity="0"/></radialGradient></defs>
<g clip-path="url(#icc)"><rect x="0" y="0" width="30" height="34" fill="#120606"/><circle cx="9" cy="13" r="6.5" fill="url(#ic1)"/><circle cx="15" cy="18.5" r="5.5" fill="url(#ic2)"/><circle cx="17.5" cy="23" r="5" fill="url(#ic3)"/><circle cx="8.5" cy="22.5" r="3.5" fill="url(#ic3)" opacity=".6"/></g>
<text x="10.6" y="23" font-size="10" fill="#0a0a0a" text-anchor="start" font-weight="bold" >5</text>
<text x="31" y="25" font-size="17.6" fill="#000" text-anchor="start" font-weight="normal" textLength="493" lengthAdjust="spacingAndGlyphs" >CalMAN 5 CalMAN Ultimate for Business 29 Days Remaining</text>
<path d="M1706 17.5H1719.5" stroke="#555" stroke-width="1.3" fill="none"/>
<rect x="1777.6" y="13.2" width="10" height="10.2" rx="1.6" fill="#fff" stroke="#222" stroke-width="1.2"/>
<path d="M1780.5 13V12.2Q1780.5 10.7 1782 10.7H1788.8Q1790.4 10.7 1790.4 12.2V19.5Q1790.4 21 1788.9 21H1788" stroke="#555" stroke-width="1.2" fill="none"/>
<path d="M1848 10.5L1861.5 23.7M1861.5 10.5L1848 23.7" stroke="#333" stroke-width="1.2" fill="none"/>
<defs><linearGradient id="lg" x1="0" y1="0" x2="0" y2="1"><stop offset="0" stop-color="#fff"/><stop offset=".55" stop-color="#f4f4f4"/><stop offset="1" stop-color="#c9c9c9"/></linearGradient></defs>
<text x="10.2" y="71" font-size="43.5" fill="#7a0c0c" text-anchor="start" font-weight="bold" textLength="181" lengthAdjust="spacingAndGlyphs" opacity=".6">CalMAN</text>
<text x="198.6" y="71" font-size="43.5" fill="#7a0c0c" text-anchor="start" font-weight="bold" textLength="29.5" lengthAdjust="spacingAndGlyphs" opacity=".6">5</text>
<text x="8.9" y="69.6" font-size="43.5" fill="url(#lg)" text-anchor="start" font-weight="bold" textLength="181" lengthAdjust="spacingAndGlyphs" >CalMAN</text>
<text x="197.3" y="69.6" font-size="43.5" fill="url(#lg)" text-anchor="start" font-weight="bold" textLength="29.5" lengthAdjust="spacingAndGlyphs" >5</text>
<g fill="none" stroke="#cf2222" stroke-width="1.7" stroke-linecap="round" stroke-linejoin="round"><path d="M136 48.8L133.8 54.6"  stroke-width="2.3"/><path d="M135.6 49.4L131 50L129.6 52.4"/><path d="M136.2 49.6L139.6 51.6L143.2 48.4"/><path d="M133.8 54.6L138.2 55.8L139.4 60.2"/><path d="M133.8 54.6L131.8 57.8L128.8 58.4"/></g><circle cx="136.7" cy="45.6" r="1.9" fill="#cf2222"/>
<path d="M246.8 54.8H262.2L254.5 62.8Z" fill="#fff"/>
<path d="M15 101.6V117.4L24 109.5Z" fill="#fff"/>
<text x="54" y="119.7" font-size="18.2" fill="#ececec" text-anchor="start" font-weight="normal" textLength="72" lengthAdjust="spacingAndGlyphs" >History 1</text>
<path d="M153.6 115.6H162.6M158.1 111.1V120.1" stroke="#8a8a8a" stroke-width="1.3" fill="none"/>
<text x="972.5" y="107" font-size="17.3" fill="#f2f2f2" text-anchor="start" font-weight="normal" textLength="101" lengthAdjust="spacingAndGlyphs" >X-Rite i1Pro 2</text>
<text x="972.5" y="128.6" font-size="17.3" fill="#f2f2f2" text-anchor="start" font-weight="normal" textLength="86" lengthAdjust="spacingAndGlyphs" >Direct View</text>
<path d="M1086.7 110.1H1101.3L1094 117.9Z" fill="#fff"/>
<text x="1155" y="117" font-size="15.2" fill="#fff" text-anchor="middle" font-weight="normal" textLength="25" lengthAdjust="spacingAndGlyphs" >239</text>
<text x="1201" y="107" font-size="17.3" fill="#f2f2f2" text-anchor="start" font-weight="normal" textLength="261" lengthAdjust="spacingAndGlyphs" >CalMAN Client 3 Pattern Generator</text>
<path d="M1474.4 110.1H1489.0L1481.7 117.9Z" fill="#fff"/>
<text x="1529.5" y="107" font-size="17.3" fill="#f2f2f2" text-anchor="start" font-weight="normal" textLength="162" lengthAdjust="spacingAndGlyphs" >Direct Display Control</text>
<path d="M1704.0 110.1H1718.6L1711.3 117.9Z" fill="#fff"/>
<rect x="1764.2" y="99.4" width="3.6" height="4.2" rx=".8" fill="#c6c6c6" transform="rotate(0 1766 110)"/><rect x="1764.2" y="99.4" width="3.6" height="4.2" rx=".8" fill="#c6c6c6" transform="rotate(45 1766 110)"/><rect x="1764.2" y="99.4" width="3.6" height="4.2" rx=".8" fill="#c6c6c6" transform="rotate(90 1766 110)"/><rect x="1764.2" y="99.4" width="3.6" height="4.2" rx=".8" fill="#c6c6c6" transform="rotate(135 1766 110)"/><rect x="1764.2" y="99.4" width="3.6" height="4.2" rx=".8" fill="#c6c6c6" transform="rotate(180 1766 110)"/><rect x="1764.2" y="99.4" width="3.6" height="4.2" rx=".8" fill="#c6c6c6" transform="rotate(225 1766 110)"/><rect x="1764.2" y="99.4" width="3.6" height="4.2" rx=".8" fill="#c6c6c6" transform="rotate(270 1766 110)"/><rect x="1764.2" y="99.4" width="3.6" height="4.2" rx=".8" fill="#c6c6c6" transform="rotate(315 1766 110)"/><circle cx="1766" cy="110" r="6.2" fill="none" stroke="#c6c6c6" stroke-width="2.3"/>
<text x="1821" y="118.2" font-size="23" fill="#f0f0f0" text-anchor="middle" font-weight="bold" >?</text>
<path d="M1881.6 101V119L1869.8 110Z" fill="#fff"/>
<text x="27.5" y="205.6" font-size="47.5" fill="#f2f2f2" text-anchor="start" font-weight="normal" textLength="191" lengthAdjust="spacingAndGlyphs" >Grayscale</text>
<text x="213" y="264" font-size="16.2" fill="#d6d6d6" text-anchor="middle" font-weight="normal" textLength="90" lengthAdjust="spacingAndGlyphs" >DeltaE 2000</text>
<text x="50.8" y="290.9" font-size="16.8" fill="#d6d6d6" text-anchor="end" font-weight="normal" >100</text>
<text x="50.8" y="317.8" font-size="16.8" fill="#d6d6d6" text-anchor="end" font-weight="normal" >90</text>
<text x="50.8" y="344.8" font-size="16.8" fill="#d6d6d6" text-anchor="end" font-weight="normal" >80</text>
<text x="50.8" y="371.7" font-size="16.8" fill="#d6d6d6" text-anchor="end" font-weight="normal" >70</text>
<text x="50.8" y="398.7" font-size="16.8" fill="#d6d6d6" text-anchor="end" font-weight="normal" >60</text>
<text x="50.8" y="425.6" font-size="16.8" fill="#d6d6d6" text-anchor="end" font-weight="normal" >50</text>
<text x="50.8" y="452.6" font-size="16.8" fill="#d6d6d6" text-anchor="end" font-weight="normal" >40</text>
<text x="50.8" y="479.6" font-size="16.8" fill="#d6d6d6" text-anchor="end" font-weight="normal" >30</text>
<text x="50.8" y="506.5" font-size="16.8" fill="#d6d6d6" text-anchor="end" font-weight="normal" >20</text>
<text x="50.8" y="533.5" font-size="16.8" fill="#d6d6d6" text-anchor="end" font-weight="normal" >10</text>
<text x="50.8" y="560.4" font-size="16.8" fill="#d6d6d6" text-anchor="end" font-weight="normal" >0</text>
<rect x="52" y="270.5" width="351" height="296.5" fill="none" stroke="#929292" stroke-width="1.6"/>
<text x="52.0" y="592.7" font-size="16.2" fill="#d6d6d6" text-anchor="middle" font-weight="normal" >0</text>
<text x="98.7" y="592.7" font-size="16.2" fill="#d6d6d6" text-anchor="middle" font-weight="normal" >2</text>
<text x="145.4" y="592.7" font-size="16.2" fill="#d6d6d6" text-anchor="middle" font-weight="normal" >4</text>
<text x="192.2" y="592.7" font-size="16.2" fill="#d6d6d6" text-anchor="middle" font-weight="normal" >6</text>
<text x="238.9" y="592.7" font-size="16.2" fill="#d6d6d6" text-anchor="middle" font-weight="normal" >8</text>
<text x="285.6" y="592.7" font-size="16.2" fill="#d6d6d6" text-anchor="middle" font-weight="normal" >10</text>
<text x="332.3" y="592.7" font-size="16.2" fill="#d6d6d6" text-anchor="middle" font-weight="normal" >12</text>
<text x="379.0" y="592.7" font-size="16.2" fill="#d6d6d6" text-anchor="middle" font-weight="normal" >14</text>
<path d="M44.8 270.5H52M44.8 297.5H52M44.8 324.4H52M44.8 351.4H52M44.8 378.3H52M44.8 405.3H52M44.8 432.2H52M44.8 459.2H52M44.8 486.1H52M44.8 513.1H52M44.8 540.0H52M44.8 567.0H52M52.0 567V574.6M98.7 567V574.6M145.4 567V574.6M192.2 567V574.6M238.9 567V574.6M285.6 567V574.6M332.3 567V574.6M379.0 567V574.6" stroke="#e0e0e0" stroke-width="1.4" fill="none"/>
<text x="787.5" y="184" font-size="16.2" fill="#d6d6d6" text-anchor="middle" font-weight="normal" textLength="94" lengthAdjust="spacingAndGlyphs" >RGB Balance</text>
<path d="M472.6 228.6H478.3" stroke="#e0e0e0" stroke-width="1.4"/>
<text x="471.8" y="234.5" font-size="16.2" fill="#d6d6d6" text-anchor="end" font-weight="normal" >40</text>
<path d="M472.6 304H478.3" stroke="#e0e0e0" stroke-width="1.4"/>
<text x="471.8" y="309.9" font-size="16.2" fill="#d6d6d6" text-anchor="end" font-weight="normal" >20</text>
<path d="M472.6 379.7H478.3" stroke="#e0e0e0" stroke-width="1.4"/>
<text x="471.8" y="385.59999999999997" font-size="16.2" fill="#d6d6d6" text-anchor="end" font-weight="normal" >0</text>
<path d="M472.6 454.8H478.3" stroke="#e0e0e0" stroke-width="1.4"/>
<text x="471.8" y="460.7" font-size="16.2" fill="#d6d6d6" text-anchor="end" font-weight="normal" >-20</text>
<path d="M472.6 530H478.3" stroke="#e0e0e0" stroke-width="1.4"/>
<text x="471.8" y="535.9" font-size="16.2" fill="#d6d6d6" text-anchor="end" font-weight="normal" >-40</text>
<path d="M478.3 228.6H1128.3M478.3 304H1128.3M478.3 379.7H1128.3M478.3 454.8H1128.3M478.3 530H1128.3" stroke="#8c8c8c" stroke-width="1.5" fill="none"/>
<clipPath id="cpa"><rect x="478.3" y="190" width="650.0" height="376.79999999999995"/></clipPath>
<polyline points="478.3,372.0 543.3,402.0 608.3,398.9 673.3,392.8 738.3,392.8 803.3,392.1 868.3,392.1 933.3,393.9 998.3,394.4 1063.3,402.9 1128.3,390.3" fill="none" stroke="#ff0000" stroke-width="3.2" stroke-linejoin="round" clip-path="url(#cpa)"/>
<polyline points="478.3,368.8 543.3,395.7 608.3,385.6 673.3,383.7 738.3,382.2 803.3,381.0 868.3,379.5 933.3,381.0 998.3,381.7 1063.3,385.3 1128.3,375.0" fill="none" stroke="#008000" stroke-width="3.2" stroke-linejoin="round" clip-path="url(#cpa)"/>
<polyline points="478.3,365.2 543.3,393.4 608.3,382.6 673.3,379.9 738.3,378.1 803.3,375.8 868.3,372.9 933.3,373.8 998.3,373.8 1063.3,377.7 1128.3,366.4" fill="none" stroke="#0000ff" stroke-width="3.2" stroke-linejoin="round" clip-path="url(#cpa)"/>
<rect x="478.3" y="190" width="650.0" height="376.79999999999995" fill="none" stroke="#929292" stroke-width="1.7"/>
<text x="478.3" y="593" font-size="16.2" fill="#d6d6d6" text-anchor="middle" font-weight="normal" >0</text>
<text x="543.3" y="593" font-size="16.2" fill="#d6d6d6" text-anchor="middle" font-weight="normal" >10</text>
<text x="608.3" y="593" font-size="16.2" fill="#d6d6d6" text-anchor="middle" font-weight="normal" >20</text>
<text x="673.3" y="593" font-size="16.2" fill="#d6d6d6" text-anchor="middle" font-weight="normal" >30</text>
<text x="738.3" y="593" font-size="16.2" fill="#d6d6d6" text-anchor="middle" font-weight="normal" >40</text>
<text x="803.3" y="593" font-size="16.2" fill="#d6d6d6" text-anchor="middle" font-weight="normal" >50</text>
<text x="868.3" y="593" font-size="16.2" fill="#d6d6d6" text-anchor="middle" font-weight="normal" >60</text>
<text x="933.3" y="593" font-size="16.2" fill="#d6d6d6" text-anchor="middle" font-weight="normal" >70</text>
<text x="998.3" y="593" font-size="16.2" fill="#d6d6d6" text-anchor="middle" font-weight="normal" >80</text>
<text x="1063.3" y="593" font-size="16.2" fill="#d6d6d6" text-anchor="middle" font-weight="normal" >90</text>
<text x="1128.3" y="593" font-size="16.2" fill="#d6d6d6" text-anchor="middle" font-weight="normal" >100</text>
<path d="M478.3 566.8V574.8M543.3 566.8V574.8M608.3 566.8V574.8M673.3 566.8V574.8M738.3 566.8V574.8M803.3 566.8V574.8M868.3 566.8V574.8M933.3 566.8V574.8M998.3 566.8V574.8M1063.3 566.8V574.8M1128.3 566.8V574.8" stroke="#e0e0e0" stroke-width="1.4" fill="none"/>
<text x="1512" y="184" font-size="16.2" fill="#d6d6d6" text-anchor="middle" font-weight="normal" textLength="123" lengthAdjust="spacingAndGlyphs" >Gamma Log/Log</text>
<path d="M1197.2 196H1203" stroke="#e0e0e0" stroke-width="1.4"/>
<text x="1196.2" y="201.9" font-size="16.2" fill="#d6d6d6" text-anchor="end" font-weight="normal" >2.6</text>
<path d="M1197.2 242.8H1203" stroke="#e0e0e0" stroke-width="1.4"/>
<text x="1196.2" y="248.70000000000002" font-size="16.2" fill="#d6d6d6" text-anchor="end" font-weight="normal" >2.4</text>
<path d="M1197.2 291.5H1203" stroke="#e0e0e0" stroke-width="1.4"/>
<text x="1196.2" y="297.4" font-size="16.2" fill="#d6d6d6" text-anchor="end" font-weight="normal" >2.2</text>
<path d="M1197.2 337.9H1203" stroke="#e0e0e0" stroke-width="1.4"/>
<text x="1196.2" y="343.79999999999995" font-size="16.2" fill="#d6d6d6" text-anchor="end" font-weight="normal" >2</text>
<path d="M1197.2 385.3H1203" stroke="#e0e0e0" stroke-width="1.4"/>
<text x="1196.2" y="391.2" font-size="16.2" fill="#d6d6d6" text-anchor="end" font-weight="normal" >1.8</text>
<path d="M1197.2 431.9H1203" stroke="#e0e0e0" stroke-width="1.4"/>
<text x="1196.2" y="437.79999999999995" font-size="16.2" fill="#d6d6d6" text-anchor="end" font-weight="normal" >1.6</text>
<path d="M1197.2 478.5H1203" stroke="#e0e0e0" stroke-width="1.4"/>
<text x="1196.2" y="484.4" font-size="16.2" fill="#d6d6d6" text-anchor="end" font-weight="normal" >1.4</text>
<path d="M1197.2 527H1203" stroke="#e0e0e0" stroke-width="1.4"/>
<text x="1196.2" y="532.9" font-size="16.2" fill="#d6d6d6" text-anchor="end" font-weight="normal" >1.2</text>
<path d="M1203 196H1853M1203 242.8H1853M1203 291.5H1853M1203 337.9H1853M1203 385.3H1853M1203 431.9H1853M1203 478.5H1853M1203 527H1853" stroke="#8c8c8c" stroke-width="1.5" fill="none"/>
<clipPath id="cpb"><rect x="1203" y="190" width="650" height="376.79999999999995"/></clipPath>
<polyline points="1203.0,484.5 1267.9,313.4 1332.8,296.6 1397.7,286.4 1462.6,280.0 1527.5,275.8 1592.4,272.0 1657.3,264.6 1722.2,255.9 1787.1,207.6 1852.0,269.5" fill="none" stroke="#8a8a8a" stroke-width="3" stroke-linejoin="miter" clip-path="url(#cpb)"/>
<polyline points="1202.1,483.5 1204.2,460.4 1208.3,434.4 1216.0,412.5 1224.4,389.6 1232.7,374.0 1246.2,353.1 1260.8,339.6 1267.9,335.7 1277.5,329.2 1294.2,321.2 1315.0,313.1 1332.8,307.6 1356.7,301.5 1377.5,297.7 1397.7,295.2 1430.0,291.0 1462.6,287.6 1500.0,285.1 1527.5,283.1 1560.0,281.0 1592.4,279.1 1625.0,277.7 1657.3,276.5 1690.0,275.3 1722.2,274.3 1755.0,273.4 1787.1,272.7 1820.0,272.0 1852.5,271.3" fill="none" stroke="#ffff00" stroke-width="3.2" stroke-linejoin="round" clip-path="url(#cpb)"/>
<rect x="1203" y="190" width="650" height="376.79999999999995" fill="none" stroke="#929292" stroke-width="1.7"/>
<text x="1203.0" y="593" font-size="16.2" fill="#d6d6d6" text-anchor="middle" font-weight="normal" >0</text>
<text x="1267.9" y="593" font-size="16.2" fill="#d6d6d6" text-anchor="middle" font-weight="normal" >10</text>
<text x="1332.8" y="593" font-size="16.2" fill="#d6d6d6" text-anchor="middle" font-weight="normal" >20</text>
<text x="1397.7" y="593" font-size="16.2" fill="#d6d6d6" text-anchor="middle" font-weight="normal" >30</text>
<text x="1462.6" y="593" font-size="16.2" fill="#d6d6d6" text-anchor="middle" font-weight="normal" >40</text>
<text x="1527.5" y="593" font-size="16.2" fill="#d6d6d6" text-anchor="middle" font-weight="normal" >50</text>
<text x="1592.4" y="593" font-size="16.2" fill="#d6d6d6" text-anchor="middle" font-weight="normal" >60</text>
<text x="1657.3" y="593" font-size="16.2" fill="#d6d6d6" text-anchor="middle" font-weight="normal" >70</text>
<text x="1722.2" y="593" font-size="16.2" fill="#d6d6d6" text-anchor="middle" font-weight="normal" >80</text>
<text x="1787.1" y="593" font-size="16.2" fill="#d6d6d6" text-anchor="middle" font-weight="normal" >90</text>
<text x="1852.0" y="593" font-size="16.2" fill="#d6d6d6" text-anchor="middle" font-weight="normal" >100</text>
<path d="M1203.0 566.8V574.8M1267.9 566.8V574.8M1332.8 566.8V574.8M1397.7 566.8V574.8M1462.6 566.8V574.8M1527.5 566.8V574.8M1592.4 566.8V574.8M1657.3 566.8V574.8M1722.2 566.8V574.8M1787.1 566.8V574.8M1852.0 566.8V574.8" stroke="#e0e0e0" stroke-width="1.4" fill="none"/>
<text x="112.6" y="640.7" font-size="33.6" fill="#f2f2f2" text-anchor="start" font-weight="normal" textLength="217.5" lengthAdjust="spacingAndGlyphs" >Avg dE2000: 2</text>
<text x="564.6" y="640.7" font-size="33.6" fill="#f2f2f2" text-anchor="start" font-weight="normal" textLength="215.5" lengthAdjust="spacingAndGlyphs" >Avg CCT: 6855</text>
<text x="988.5" y="640.7" font-size="33.6" fill="#f2f2f2" text-anchor="start" font-weight="normal" textLength="314.5" lengthAdjust="spacingAndGlyphs" >Contrast Ratio: 1050</text>
<text x="1475.6" y="640.7" font-size="33.6" fill="#f2f2f2" text-anchor="start" font-weight="normal" textLength="289.5" lengthAdjust="spacingAndGlyphs" >Total Gamma: 2.27</text>
<text x="358.5" y="811.2" font-size="13.6" fill="#fff" text-anchor="middle" font-weight="normal" >0</text>
<text x="488.9" y="811.2" font-size="13.6" fill="#fff" text-anchor="middle" font-weight="normal" >10</text>
<text x="619.3" y="811.2" font-size="13.6" fill="#fff" text-anchor="middle" font-weight="normal" >20</text>
<text x="749.8" y="811.2" font-size="13.6" fill="#fff" text-anchor="middle" font-weight="normal" >30</text>
<text x="880.2" y="811.2" font-size="13.6" fill="#fff" text-anchor="middle" font-weight="normal" >40</text>
<text x="1010.6" y="811.2" font-size="13.6" fill="#fff" text-anchor="middle" font-weight="normal" >50</text>
<text x="1141.0" y="811.2" font-size="13.6" fill="#fff" text-anchor="middle" font-weight="normal" >60</text>
<text x="1271.4" y="811.2" font-size="13.6" fill="#fff" text-anchor="middle" font-weight="normal" >70</text>
<text x="1401.9" y="811.2" font-size="13.6" fill="#fff" text-anchor="middle" font-weight="normal" >80</text>
<text x="1532.3" y="811.2" font-size="13.6" fill="#fff" text-anchor="middle" font-weight="normal" >90</text>
<text x="1662.7" y="811.2" font-size="13.6" fill="#fff" text-anchor="middle" font-weight="normal" >100</text>
<text x="0" y="0" font-size="13.6" fill="#fff" text-anchor="start" font-weight="normal" textLength="41" lengthAdjust="spacingAndGlyphs" transform="translate(294.3 720) rotate(-90)">Actual</text>
<text x="0" y="0" font-size="13.6" fill="#fff" text-anchor="start" font-weight="normal" textLength="41" lengthAdjust="spacingAndGlyphs" transform="translate(294.3 788) rotate(-90)">Target</text>
<text x="17" y="884.1" font-size="33.8" fill="#f2f2f2" text-anchor="start" font-weight="normal" textLength="249" lengthAdjust="spacingAndGlyphs" >Current Reading</text>
<text x="17" y="934.6" font-size="30.2" fill="#f2f2f2" text-anchor="start" font-weight="normal" textLength="116.5" lengthAdjust="spacingAndGlyphs" >x: 0.3083</text>
<text x="17" y="983" font-size="30.2" fill="#f2f2f2" text-anchor="start" font-weight="normal" textLength="117" lengthAdjust="spacingAndGlyphs" >y: 0.3267</text>
<text x="17" y="1031.6" font-size="30.2" fill="#f2f2f2" text-anchor="start" font-weight="normal" textLength="126" lengthAdjust="spacingAndGlyphs" >fL: 175.04</text>
<text x="17" y="1079.2" font-size="30.2" fill="#f2f2f2" text-anchor="start" font-weight="normal" textLength="181" lengthAdjust="spacingAndGlyphs" >cd/m²: 599.73</text>
<clipPath id="cpc"><rect x="422" y="858" width="269.79999999999995" height="204.5"/></clipPath>
<polyline points="411.5,1101.7 418.8,1095.4 426.1,1089.1 433.4,1083.0 440.7,1076.8 448.0,1070.7 455.3,1064.7 462.6,1058.7 469.9,1052.7 477.2,1046.8 484.5,1041.0 491.8,1035.1 499.1,1029.4 506.4,1023.7 513.7,1018.0 521.0,1012.3 528.3,1006.8 535.6,1001.2 542.9,995.7 550.2,990.3 557.5,984.9 564.8,979.5 572.1,974.2 579.4,968.9 586.7,963.7 594.0,958.5 601.3,953.3 608.6,948.2 615.9,943.2 623.2,938.2 630.5,933.2 637.8,928.3 645.1,923.4 652.4,918.5 659.7,913.7 667.0,908.9 674.3,904.2 681.6,899.5 688.9,894.9 696.2,890.3 703.5,885.7" fill="none" stroke="#000" stroke-width="3.3" clip-path="url(#cpc)"/>
<rect x="548.8" y="952.8" width="15" height="15" fill="#fff" stroke="#000" stroke-width="1.9"/>
<circle cx="502.9" cy="971.3" r="4.6" fill="rgb(51,51,51)" stroke="#1a1a1a" stroke-width="1.1"/>
<circle cx="512.6" cy="970.5" r="4.6" fill="rgb(26,26,26)" stroke="#1a1a1a" stroke-width="1.1"/>
<circle cx="525.0" cy="972.6" r="4.6" fill="rgb(76,76,76)" stroke="#1a1a1a" stroke-width="1.1"/>
<circle cx="526.7" cy="969.3" r="4.6" fill="rgb(102,102,102)" stroke="#1a1a1a" stroke-width="1.1"/>
<circle cx="527.8" cy="970.9" r="4.6" fill="rgb(128,128,128)" stroke="#1a1a1a" stroke-width="1.1"/>
<circle cx="527.8" cy="973.4" r="4.6" fill="rgb(153,153,153)" stroke="#1a1a1a" stroke-width="1.1"/>
<circle cx="528.8" cy="971.8" r="4.6" fill="rgb(178,178,178)" stroke="#1a1a1a" stroke-width="1.1"/>
<circle cx="531.0" cy="970.9" r="4.6" fill="rgb(204,204,204)" stroke="#1a1a1a" stroke-width="1.1"/>
<circle cx="528.3" cy="970.5" r="4.6" fill="rgb(230,230,230)" stroke="#1a1a1a" stroke-width="1.1"/>
<circle cx="532.1" cy="970.5" r="4.6" fill="rgb(255,255,255)" stroke="#1a1a1a" stroke-width="1.1"/>
<rect x="422" y="858" width="269.79999999999995" height="204.5" fill="none" stroke="#929292" stroke-width="1.6"/>
<text x="413.4" y="880.9" font-size="15.8" fill="#d6d6d6" text-anchor="end" font-weight="normal" textLength="31.5" lengthAdjust="spacingAndGlyphs" >0.35</text>
<text x="413.4" y="921.9" font-size="15.8" fill="#d6d6d6" text-anchor="end" font-weight="normal" textLength="31.5" lengthAdjust="spacingAndGlyphs" >0.34</text>
<text x="413.4" y="962.9" font-size="15.8" fill="#d6d6d6" text-anchor="end" font-weight="normal" textLength="31.5" lengthAdjust="spacingAndGlyphs" >0.33</text>
<text x="413.4" y="1003.5" font-size="15.8" fill="#d6d6d6" text-anchor="end" font-weight="normal" textLength="31.5" lengthAdjust="spacingAndGlyphs" >0.32</text>
<text x="413.4" y="1044.0" font-size="15.8" fill="#d6d6d6" text-anchor="end" font-weight="normal" textLength="31.5" lengthAdjust="spacingAndGlyphs" >0.31</text>
<text x="433" y="1088.2" font-size="15.8" fill="#d6d6d6" text-anchor="middle" font-weight="normal" >0.29</text>
<text x="487.2" y="1088.2" font-size="15.8" fill="#d6d6d6" text-anchor="middle" font-weight="normal" >0.3</text>
<text x="541.1" y="1088.2" font-size="15.8" fill="#d6d6d6" text-anchor="middle" font-weight="normal" >0.31</text>
<text x="595" y="1088.2" font-size="15.8" fill="#d6d6d6" text-anchor="middle" font-weight="normal" >0.32</text>
<text x="649.2" y="1088.2" font-size="15.8" fill="#d6d6d6" text-anchor="middle" font-weight="normal" >0.33</text>
<path d="M415.6 875.1H422M415.6 916.1H422M415.6 957.1H422M415.6 997.7H422M415.6 1038.2H422M433 1062.5V1069.6M487.2 1062.5V1069.6M541.1 1062.5V1069.6M595 1062.5V1069.6M649.2 1062.5V1069.6" stroke="#e0e0e0" stroke-width="1.4" fill="none"/>
<clipPath id="cpt"><rect x="712.2" y="830" width="1169.0" height="252"/></clipPath><g clip-path="url(#cpt)">
<text x="879.6" y="855.6" font-size="16.4" fill="#fff" text-anchor="start" font-weight="normal" >0</text>
<text x="984.3" y="855.6" font-size="16.4" fill="#fff" text-anchor="start" font-weight="normal" >10</text>
<text x="1078.8" y="855.6" font-size="16.4" fill="#fff" text-anchor="start" font-weight="normal" >20</text>
<text x="1173.3" y="855.6" font-size="16.4" fill="#fff" text-anchor="start" font-weight="normal" >30</text>
<text x="1267.8" y="855.6" font-size="16.4" fill="#fff" text-anchor="start" font-weight="normal" >40</text>
<text x="1362.5" y="855.6" font-size="16.4" fill="#fff" text-anchor="start" font-weight="normal" >50</text>
<text x="1457.3" y="855.6" font-size="16.4" fill="#fff" text-anchor="start" font-weight="normal" >60</text>
<text x="1551.8" y="855.6" font-size="16.4" fill="#fff" text-anchor="start" font-weight="normal" >70</text>
<text x="1646.3" y="855.6" font-size="16.4" fill="#fff" text-anchor="start" font-weight="normal" >80</text>
<text x="1741.2" y="855.6" font-size="16.4" fill="#fff" text-anchor="start" font-weight="normal" >90</text>
<text x="1836" y="855.6" font-size="16.4" fill="#fff" text-anchor="start" font-weight="normal" >100</text>
<text x="732.3" y="888.0" font-size="18.3" fill="#f4f4f4" text-anchor="start" font-weight="normal" textLength="62" lengthAdjust="spacingAndGlyphs" >x: CIE31</text>
<text x="879.6" y="888.0" font-size="18.8" fill="#f4f4f4" text-anchor="start" font-weight="normal" textLength="53.6" lengthAdjust="spacingAndGlyphs" >0.2678</text>
<text x="984.3" y="888.0" font-size="18.8" fill="#f4f4f4" text-anchor="start" font-weight="normal" textLength="53.6" lengthAdjust="spacingAndGlyphs" >0.3047</text>
<text x="1078.8" y="888.0" font-size="18.8" fill="#f4f4f4" text-anchor="start" font-weight="normal" textLength="53.6" lengthAdjust="spacingAndGlyphs" >0.3029</text>
<text x="1173.3" y="888.0" font-size="18.8" fill="#f4f4f4" text-anchor="start" font-weight="normal" textLength="53.6" lengthAdjust="spacingAndGlyphs" >0.3070</text>
<text x="1267.8" y="888.0" font-size="18.8" fill="#f4f4f4" text-anchor="start" font-weight="normal" textLength="53.6" lengthAdjust="spacingAndGlyphs" >0.3073</text>
<text x="1362.5" y="888.0" font-size="18.8" fill="#f4f4f4" text-anchor="start" font-weight="normal" textLength="53.6" lengthAdjust="spacingAndGlyphs" >0.3075</text>
<text x="1457.3" y="888.0" font-size="18.8" fill="#f4f4f4" text-anchor="start" font-weight="normal" textLength="53.6" lengthAdjust="spacingAndGlyphs" >0.3075</text>
<text x="1551.8" y="888.0" font-size="18.8" fill="#f4f4f4" text-anchor="start" font-weight="normal" textLength="53.6" lengthAdjust="spacingAndGlyphs" >0.3077</text>
<text x="1646.3" y="888.0" font-size="18.8" fill="#f4f4f4" text-anchor="start" font-weight="normal" textLength="53.6" lengthAdjust="spacingAndGlyphs" >0.3081</text>
<text x="1741.2" y="888.0" font-size="18.8" fill="#f4f4f4" text-anchor="start" font-weight="normal" textLength="53.6" lengthAdjust="spacingAndGlyphs" >0.3076</text>
<text x="1836" y="888.0" font-size="18.8" fill="#f4f4f4" text-anchor="start" font-weight="normal" textLength="53.6" lengthAdjust="spacingAndGlyphs" >0.3083</text>
<text x="732.3" y="918.6" font-size="18.3" fill="#f4f4f4" text-anchor="start" font-weight="normal" textLength="62" lengthAdjust="spacingAndGlyphs" >y: CIE31</text>
<text x="879.6" y="918.6" font-size="18.8" fill="#f4f4f4" text-anchor="start" font-weight="normal" textLength="53.6" lengthAdjust="spacingAndGlyphs" >0.2924</text>
<text x="984.3" y="918.6" font-size="18.8" fill="#f4f4f4" text-anchor="start" font-weight="normal" textLength="53.6" lengthAdjust="spacingAndGlyphs" >0.3267</text>
<text x="1078.8" y="918.6" font-size="18.8" fill="#f4f4f4" text-anchor="start" font-weight="normal" textLength="53.6" lengthAdjust="spacingAndGlyphs" >0.3265</text>
<text x="1173.3" y="918.6" font-size="18.8" fill="#f4f4f4" text-anchor="start" font-weight="normal" textLength="53.6" lengthAdjust="spacingAndGlyphs" >0.3262</text>
<text x="1267.8" y="918.6" font-size="18.8" fill="#f4f4f4" text-anchor="start" font-weight="normal" textLength="53.6" lengthAdjust="spacingAndGlyphs" >0.3270</text>
<text x="1362.5" y="918.6" font-size="18.8" fill="#f4f4f4" text-anchor="start" font-weight="normal" textLength="53.6" lengthAdjust="spacingAndGlyphs" >0.3266</text>
<text x="1457.3" y="918.6" font-size="18.8" fill="#f4f4f4" text-anchor="start" font-weight="normal" textLength="53.6" lengthAdjust="spacingAndGlyphs" >0.3260</text>
<text x="1551.8" y="918.6" font-size="18.8" fill="#f4f4f4" text-anchor="start" font-weight="normal" textLength="53.6" lengthAdjust="spacingAndGlyphs" >0.3264</text>
<text x="1646.3" y="918.6" font-size="18.8" fill="#f4f4f4" text-anchor="start" font-weight="normal" textLength="53.6" lengthAdjust="spacingAndGlyphs" >0.3266</text>
<text x="1741.2" y="918.6" font-size="18.8" fill="#f4f4f4" text-anchor="start" font-weight="normal" textLength="53.6" lengthAdjust="spacingAndGlyphs" >0.3267</text>
<text x="1836" y="918.6" font-size="18.8" fill="#f4f4f4" text-anchor="start" font-weight="normal" textLength="53.6" lengthAdjust="spacingAndGlyphs" >0.3267</text>
<text x="732.3" y="949.3" font-size="18.3" fill="#f4f4f4" text-anchor="start" font-weight="normal" >Y</text>
<text x="879.6" y="949.3" font-size="18.8" fill="#f4f4f4" text-anchor="start" font-weight="normal" textLength="53.6" lengthAdjust="spacingAndGlyphs" >0.5714</text>
<text x="984.3" y="949.3" font-size="18.8" fill="#f4f4f4" text-anchor="start" font-weight="normal" textLength="53.6" lengthAdjust="spacingAndGlyphs" >5.0064</text>
<text x="1078.8" y="949.3" font-size="18.8" fill="#f4f4f4" text-anchor="start" font-weight="normal" textLength="63.3" lengthAdjust="spacingAndGlyphs" >18.3320</text>
<text x="1173.3" y="949.3" font-size="18.8" fill="#f4f4f4" text-anchor="start" font-weight="normal" textLength="63.3" lengthAdjust="spacingAndGlyphs" >41.2993</text>
<text x="1267.8" y="949.3" font-size="18.8" fill="#f4f4f4" text-anchor="start" font-weight="normal" textLength="63.3" lengthAdjust="spacingAndGlyphs" >77.2185</text>
<text x="1362.5" y="949.3" font-size="18.8" fill="#f4f4f4" text-anchor="start" font-weight="normal" textLength="73.1" lengthAdjust="spacingAndGlyphs" >126.7436</text>
<text x="1457.3" y="949.3" font-size="18.8" fill="#f4f4f4" text-anchor="start" font-weight="normal" textLength="73.1" lengthAdjust="spacingAndGlyphs" >187.9738</text>
<text x="1551.8" y="949.3" font-size="18.8" fill="#f4f4f4" text-anchor="start" font-weight="normal" textLength="73.1" lengthAdjust="spacingAndGlyphs" >262.1163</text>
<text x="1646.3" y="949.3" font-size="18.8" fill="#f4f4f4" text-anchor="start" font-weight="normal" textLength="73.1" lengthAdjust="spacingAndGlyphs" >355.8466</text>
<text x="1741.2" y="949.3" font-size="18.8" fill="#f4f4f4" text-anchor="start" font-weight="normal" textLength="73.1" lengthAdjust="spacingAndGlyphs" >461.1965</text>
<text x="1836" y="949.3" font-size="18.8" fill="#f4f4f4" text-anchor="start" font-weight="normal" textLength="73.1" lengthAdjust="spacingAndGlyphs" >599.7300</text>
<text x="732.3" y="979.9" font-size="18.3" fill="#f4f4f4" text-anchor="start" font-weight="normal" textLength="66" lengthAdjust="spacingAndGlyphs" >Target Y</text>
<text x="879.6" y="979.9" font-size="18.8" fill="#f4f4f4" text-anchor="start" font-weight="normal" textLength="53.6" lengthAdjust="spacingAndGlyphs" >0.0000</text>
<text x="984.3" y="979.9" font-size="18.8" fill="#f4f4f4" text-anchor="start" font-weight="normal" textLength="53.6" lengthAdjust="spacingAndGlyphs" >6.1951</text>
<text x="1078.8" y="979.9" font-size="18.8" fill="#f4f4f4" text-anchor="start" font-weight="normal" textLength="63.3" lengthAdjust="spacingAndGlyphs" >19.8540</text>
<text x="1173.3" y="979.9" font-size="18.8" fill="#f4f4f4" text-anchor="start" font-weight="normal" textLength="63.3" lengthAdjust="spacingAndGlyphs" >43.3437</text>
<text x="1267.8" y="979.9" font-size="18.8" fill="#f4f4f4" text-anchor="start" font-weight="normal" textLength="63.3" lengthAdjust="spacingAndGlyphs" >79.6852</text>
<text x="1362.5" y="979.9" font-size="18.8" fill="#f4f4f4" text-anchor="start" font-weight="normal" textLength="73.1" lengthAdjust="spacingAndGlyphs" >129.4582</text>
<text x="1457.3" y="979.9" font-size="18.8" fill="#f4f4f4" text-anchor="start" font-weight="normal" textLength="73.1" lengthAdjust="spacingAndGlyphs" >191.0424</text>
<text x="1551.8" y="979.9" font-size="18.8" fill="#f4f4f4" text-anchor="start" font-weight="normal" textLength="73.1" lengthAdjust="spacingAndGlyphs" >267.0010</text>
<text x="1646.3" y="979.9" font-size="18.8" fill="#f4f4f4" text-anchor="start" font-weight="normal" textLength="73.1" lengthAdjust="spacingAndGlyphs" >362.1340</text>
<text x="1741.2" y="979.9" font-size="18.8" fill="#f4f4f4" text-anchor="start" font-weight="normal" textLength="73.1" lengthAdjust="spacingAndGlyphs" >474.5659</text>
<text x="1836" y="979.9" font-size="18.8" fill="#f4f4f4" text-anchor="start" font-weight="normal" textLength="73.1" lengthAdjust="spacingAndGlyphs" >599.7300</text>
<text x="732.3" y="1010.5" font-size="18.3" fill="#f4f4f4" text-anchor="start" font-weight="normal" textLength="136.5" lengthAdjust="spacingAndGlyphs" >Gamma Log/Log</text>
<text x="879.6" y="1010.5" font-size="18.8" fill="#f4f4f4" text-anchor="start" font-weight="normal" textLength="53.6" lengthAdjust="spacingAndGlyphs" >1.3704</text>
<text x="984.3" y="1010.5" font-size="18.8" fill="#f4f4f4" text-anchor="start" font-weight="normal" textLength="53.6" lengthAdjust="spacingAndGlyphs" >2.0961</text>
<text x="1078.8" y="1010.5" font-size="18.8" fill="#f4f4f4" text-anchor="start" font-weight="normal" textLength="53.6" lengthAdjust="spacingAndGlyphs" >2.1671</text>
<text x="1173.3" y="1010.5" font-size="18.8" fill="#f4f4f4" text-anchor="start" font-weight="normal" textLength="53.6" lengthAdjust="spacingAndGlyphs" >2.2103</text>
<text x="1267.8" y="1010.5" font-size="18.8" fill="#f4f4f4" text-anchor="start" font-weight="normal" textLength="53.6" lengthAdjust="spacingAndGlyphs" >2.2371</text>
<text x="1362.5" y="1010.5" font-size="18.8" fill="#f4f4f4" text-anchor="start" font-weight="normal" textLength="53.6" lengthAdjust="spacingAndGlyphs" >2.2551</text>
<text x="1457.3" y="1010.5" font-size="18.8" fill="#f4f4f4" text-anchor="start" font-weight="normal" textLength="53.6" lengthAdjust="spacingAndGlyphs" >2.2712</text>
<text x="1551.8" y="1010.5" font-size="18.8" fill="#f4f4f4" text-anchor="start" font-weight="normal" textLength="53.6" lengthAdjust="spacingAndGlyphs" >2.3025</text>
<text x="1646.3" y="1010.5" font-size="18.8" fill="#f4f4f4" text-anchor="start" font-weight="normal" textLength="53.6" lengthAdjust="spacingAndGlyphs" >2.3392</text>
<text x="1741.2" y="1010.5" font-size="18.8" fill="#f4f4f4" text-anchor="start" font-weight="normal" textLength="53.6" lengthAdjust="spacingAndGlyphs" >2.5455</text>
<text x="1836" y="1010.5" font-size="18.8" fill="#f4f4f4" text-anchor="start" font-weight="normal" textLength="53.6" lengthAdjust="spacingAndGlyphs" >2.2740</text>
<text x="732.3" y="1041.2" font-size="18.3" fill="#f4f4f4" text-anchor="start" font-weight="normal" textLength="33" lengthAdjust="spacingAndGlyphs" >CCT</text>
<text x="879.6" y="1041.2" font-size="18.8" fill="#f4f4f4" text-anchor="start" font-weight="normal" textLength="92.6" lengthAdjust="spacingAndGlyphs" >11036.0000</text>
<text x="984.3" y="1041.2" font-size="18.8" fill="#f4f4f4" text-anchor="start" font-weight="normal" textLength="82.8" lengthAdjust="spacingAndGlyphs" >6978.0000</text>
<text x="1078.8" y="1041.2" font-size="18.8" fill="#f4f4f4" text-anchor="start" font-weight="normal" textLength="82.8" lengthAdjust="spacingAndGlyphs" >7088.0000</text>
<text x="1173.3" y="1041.2" font-size="18.8" fill="#f4f4f4" text-anchor="start" font-weight="normal" textLength="82.8" lengthAdjust="spacingAndGlyphs" >6851.0000</text>
<text x="1267.8" y="1041.2" font-size="18.8" fill="#f4f4f4" text-anchor="start" font-weight="normal" textLength="82.8" lengthAdjust="spacingAndGlyphs" >6826.0000</text>
<text x="1362.5" y="1041.2" font-size="18.8" fill="#f4f4f4" text-anchor="start" font-weight="normal" textLength="82.8" lengthAdjust="spacingAndGlyphs" >6816.0000</text>
<text x="1457.3" y="1041.2" font-size="18.8" fill="#f4f4f4" text-anchor="start" font-weight="normal" textLength="82.8" lengthAdjust="spacingAndGlyphs" >6825.0000</text>
<text x="1551.8" y="1041.2" font-size="18.8" fill="#f4f4f4" text-anchor="start" font-weight="normal" textLength="82.8" lengthAdjust="spacingAndGlyphs" >6805.0000</text>
<text x="1646.3" y="1041.2" font-size="18.8" fill="#f4f4f4" text-anchor="start" font-weight="normal" textLength="82.8" lengthAdjust="spacingAndGlyphs" >6782.0000</text>
<text x="1741.2" y="1041.2" font-size="18.8" fill="#f4f4f4" text-anchor="start" font-weight="normal" textLength="82.8" lengthAdjust="spacingAndGlyphs" >6809.0000</text>
<text x="1836" y="1041.2" font-size="18.8" fill="#f4f4f4" text-anchor="start" font-weight="normal" textLength="82.8" lengthAdjust="spacingAndGlyphs" >6773.0000</text>
<text x="732.3" y="1071.8" font-size="18.3" fill="#f4f4f4" text-anchor="start" font-weight="normal" textLength="67" lengthAdjust="spacingAndGlyphs" >ΔE 2000</text>
<text x="879.6" y="1071.8" font-size="18.8" fill="#f4f4f4" text-anchor="start" font-weight="normal" textLength="53.6" lengthAdjust="spacingAndGlyphs" >0.7722</text>
<text x="984.3" y="1071.8" font-size="18.8" fill="#f4f4f4" text-anchor="start" font-weight="normal" textLength="53.6" lengthAdjust="spacingAndGlyphs" >1.4584</text>
<text x="1078.8" y="1071.8" font-size="18.8" fill="#f4f4f4" text-anchor="start" font-weight="normal" textLength="53.6" lengthAdjust="spacingAndGlyphs" >2.0963</text>
<text x="1173.3" y="1071.8" font-size="18.8" fill="#f4f4f4" text-anchor="start" font-weight="normal" textLength="53.6" lengthAdjust="spacingAndGlyphs" >1.4424</text>
<text x="1267.8" y="1071.8" font-size="18.8" fill="#f4f4f4" text-anchor="start" font-weight="normal" textLength="53.6" lengthAdjust="spacingAndGlyphs" >1.7349</text>
<text x="1362.5" y="1071.8" font-size="18.8" fill="#f4f4f4" text-anchor="start" font-weight="normal" textLength="53.6" lengthAdjust="spacingAndGlyphs" >1.7852</text>
<text x="1457.3" y="1071.8" font-size="18.8" fill="#f4f4f4" text-anchor="start" font-weight="normal" textLength="53.6" lengthAdjust="spacingAndGlyphs" >1.9229</text>
<text x="1551.8" y="1071.8" font-size="18.8" fill="#f4f4f4" text-anchor="start" font-weight="normal" textLength="53.6" lengthAdjust="spacingAndGlyphs" >2.0572</text>
<text x="1646.3" y="1071.8" font-size="18.8" fill="#f4f4f4" text-anchor="start" font-weight="normal" textLength="53.6" lengthAdjust="spacingAndGlyphs" >2.1057</text>
<text x="1741.2" y="1071.8" font-size="18.8" fill="#f4f4f4" text-anchor="start" font-weight="normal" textLength="53.6" lengthAdjust="spacingAndGlyphs" >2.6493</text>
<text x="1836" y="1071.8" font-size="18.8" fill="#f4f4f4" text-anchor="start" font-weight="normal" textLength="53.6" lengthAdjust="spacingAndGlyphs" >2.3790</text>
</g>
<path d="M741.5 1084.6V1095.6L733.3 1090.1Z" fill="#2a2a2a"/><path d="M1868.5 1084.6V1095.6L1876.7 1090.1Z" fill="#2a2a2a"/>
<text x="63.2" y="1191" font-size="15.6" fill="#242424" text-anchor="middle" font-weight="bold" stroke="#242424" stroke-width=".35">0</text>
<text x="189.9" y="1191" font-size="15.6" fill="#242424" text-anchor="middle" font-weight="bold" stroke="#242424" stroke-width=".35">10</text>
<text x="316.6" y="1191" font-size="15.6" fill="#242424" text-anchor="middle" font-weight="bold" stroke="#242424" stroke-width=".35">20</text>
<text x="443.3" y="1191" font-size="15.6" fill="#242424" text-anchor="middle" font-weight="bold" stroke="#242424" stroke-width=".35">30</text>
<text x="570.0" y="1191" font-size="15.6" fill="#242424" text-anchor="middle" font-weight="bold" stroke="#242424" stroke-width=".35">40</text>
<text x="696.8" y="1191" font-size="15.6" fill="#242424" text-anchor="middle" font-weight="bold" stroke="#242424" stroke-width=".35">50</text>
<text x="823.5" y="1191" font-size="15.6" fill="#242424" text-anchor="middle" font-weight="bold" stroke="#242424" stroke-width=".35">60</text>
<text x="950.2" y="1191" font-size="15.6" fill="#242424" text-anchor="middle" font-weight="bold" stroke="#242424" stroke-width=".35">70</text>
<text x="1076.9" y="1191" font-size="15.6" fill="#242424" text-anchor="middle" font-weight="bold" stroke="#242424" stroke-width=".35">80</text>
<text x="1203.6" y="1191" font-size="15.6" fill="#242424" text-anchor="middle" font-weight="bold" stroke="#242424" stroke-width=".35">90</text>
<text x="1330.3" y="1191" font-size="15.6" fill="#fff" text-anchor="middle" font-weight="bold" >100</text>
<path d="M1426.8 1121.3H1441.2L1434 1114.2Z" fill="#2e2e2e"/>
<rect x="1501" y="1122" width="12.4" height="11.6" fill="#333"/>
<path d="M1573.4 1121.4V1136.2L1585.8 1128.8Z" fill="#333"/>
<path d="M1642.4 1122.2H1639.2V1136H1642.4M1651 1122.2H1654.2V1136H1651" fill="none" stroke="#333" stroke-width="2.9"/><path d="M1642.8 1128.6H1645.4M1648 1128.6H1650.6" stroke="#333" stroke-width="2.5" />
<path d="M1715 1128C1712 1123.6 1705.4 1123.6 1705.4 1128S1712 1132.4 1715 1128C1718 1123.6 1724.6 1123.6 1724.6 1128S1718 1132.4 1715 1128Z" fill="none" stroke="#333" stroke-width="2.3"/>
<path d="M1776.6 1126.5A8 8 0 0 1 1790.4 1122.6" fill="none" stroke="#333" stroke-width="2.6"/><path d="M1792.6 1117.6V1125.6H1784.6Z" fill="#333"/><path d="M1792.2 1129.5A8 8 0 0 1 1778.4 1133.4" fill="none" stroke="#333" stroke-width="2.6"/><path d="M1776.2 1138.4V1130.4H1784.2Z" fill="#333"/>
<path d="M1519 1168.5L1512.6 1175.6L1519 1182.7M1525.6 1168.5L1519.2 1175.6L1525.6 1182.7" fill="none" stroke="#333" stroke-width="2.2"/>
<path d="M1840 1168.5L1846.4 1175.6L1840 1182.7M1846.6 1168.5L1853 1175.6L1846.6 1182.7" fill="none" stroke="#333" stroke-width="2.2"/>
<text x="1559.5" y="1187.3" font-size="32.5" fill="#303030" text-anchor="start" font-weight="normal" textLength="79" lengthAdjust="spacingAndGlyphs" stroke="#303030" stroke-width=".7">Back</text>
<text x="1723.5" y="1187.3" font-size="32.5" fill="#303030" text-anchor="start" font-weight="normal" textLength="81" lengthAdjust="spacingAndGlyphs" stroke="#303030" stroke-width=".7">Next</text>
</svg>
</div>
</body></html>
